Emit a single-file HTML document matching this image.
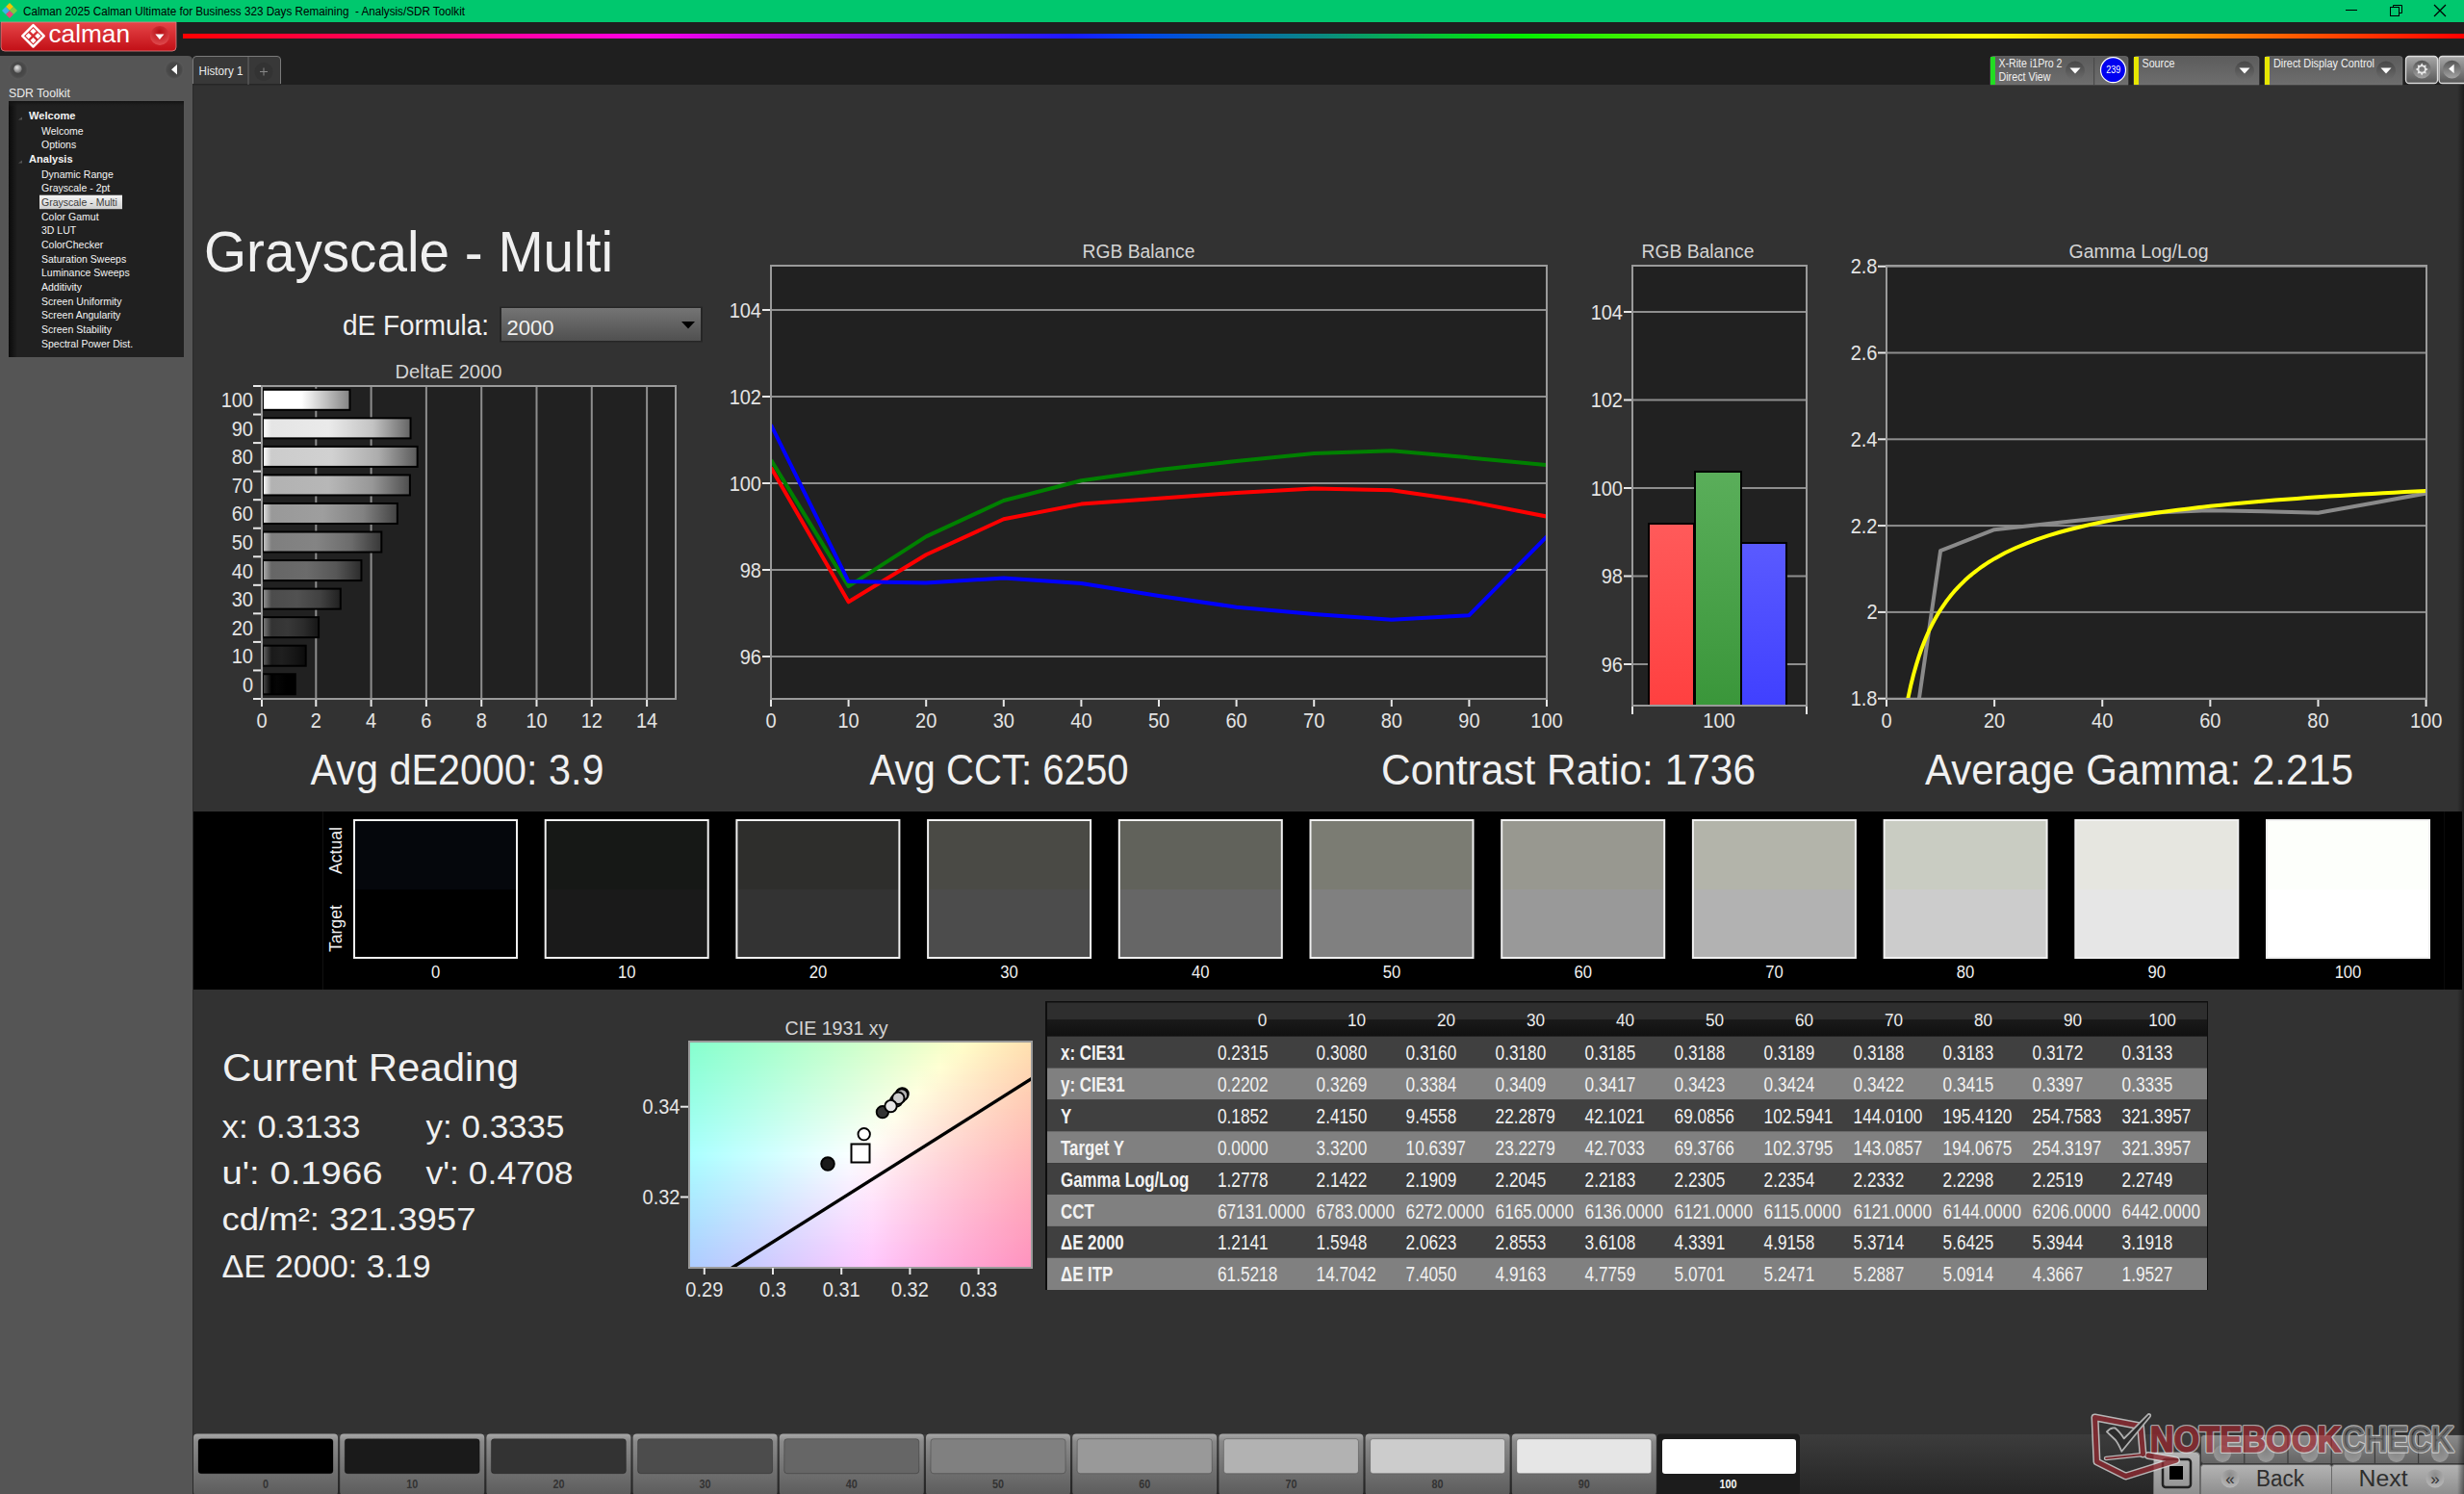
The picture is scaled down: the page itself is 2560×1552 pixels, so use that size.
<!DOCTYPE html><html><head><meta charset="utf-8"><title>Calman Grayscale - Multi</title><style>html,body{margin:0;padding:0;background:#323232;overflow:hidden}svg{position:absolute;left:0;top:0;display:block}text{font-family:"Liberation Sans",sans-serif}</style></head><body><svg width="2560" height="1552" viewBox="0 0 2560 1552"><defs><linearGradient id="gRed" x1="0" y1="0" x2="0" y2="1"><stop offset="0" stop-color="#e64548"/><stop offset="1" stop-color="#c20f16"/></linearGradient><radialGradient id="gRedBtn" cx="0.5" cy="0.3" r="0.7"><stop offset="0" stop-color="#b50d14"/><stop offset="1" stop-color="#e04a4e"/></radialGradient><linearGradient id="gRain" x1="190" y1="0" x2="2560" y2="0" gradientUnits="userSpaceOnUse"><stop offset="0" stop-color="#ff0000"/><stop offset="0.202" stop-color="#ff00e6"/><stop offset="0.39" stop-color="#1a1aff"/><stop offset="0.42" stop-color="#0044ee"/><stop offset="0.50" stop-color="#0a8a80"/><stop offset="0.585" stop-color="#00ee00"/><stop offset="0.79" stop-color="#ffff00"/><stop offset="1" stop-color="#ff0000"/></linearGradient><radialGradient id="gKnob" cx="0.5" cy="0.5" r="0.5"><stop offset="0" stop-color="#3e3e3e"/><stop offset="0.75" stop-color="#4a4a4a"/><stop offset="1" stop-color="#5a5a5a"/></radialGradient><radialGradient id="gDot" cx="0.4" cy="0.35" r="0.6"><stop offset="0" stop-color="#e8e8e8"/><stop offset="1" stop-color="#777"/></radialGradient><linearGradient id="gTreeL" x1="0" y1="0" x2="1" y2="0"><stop offset="0" stop-color="#0a0a0a"/><stop offset="1" stop-color="#202020"/></linearGradient><linearGradient id="gTreeT" x1="0" y1="0" x2="0" y2="1"><stop offset="0" stop-color="#101010"/><stop offset="1" stop-color="#202020" stop-opacity="0"/></linearGradient><linearGradient id="gSel" x1="0" y1="0" x2="0" y2="1"><stop offset="0" stop-color="#f4f4f4"/><stop offset="1" stop-color="#cfcfcf"/></linearGradient><linearGradient id="gCtl" x1="0" y1="0" x2="0" y2="1"><stop offset="0" stop-color="#5c5c5c"/><stop offset="1" stop-color="#6e6e6e"/></linearGradient><linearGradient id="gCtlBtn" x1="0" y1="0" x2="0" y2="1"><stop offset="0" stop-color="#474747"/><stop offset="1" stop-color="#6c6c6c"/></linearGradient><linearGradient id="gBtn2" x1="0" y1="0" x2="0" y2="1"><stop offset="0" stop-color="#a8a8a8"/><stop offset="1" stop-color="#575757"/></linearGradient><linearGradient id="gBtnC" x1="0" y1="0" x2="0" y2="1"><stop offset="0" stop-color="#555"/><stop offset="1" stop-color="#a4a4a4"/></linearGradient><linearGradient id="gCombo" x1="0" y1="0" x2="0" y2="1"><stop offset="0" stop-color="#747474"/><stop offset="1" stop-color="#505050"/></linearGradient><linearGradient id="gDE100" gradientUnits="userSpaceOnUse" x1="273" y1="0" x2="362.4" y2="0"><stop offset="0" stop-color="#fff"/><stop offset="0.45" stop-color="#fff"/><stop offset="1" stop-color="#858585"/></linearGradient><linearGradient id="gDE90" gradientUnits="userSpaceOnUse" x1="273" y1="0" x2="425.5" y2="0"><stop offset="0" stop-color="rgb(255,255,255)"/><stop offset="0.059" stop-color="rgb(229,229,229)"/><stop offset="0.45" stop-color="rgb(234,234,234)"/><stop offset="0.75" stop-color="rgb(195,195,195)"/><stop offset="1" stop-color="rgb(103,103,103)"/></linearGradient><linearGradient id="gDE80" gradientUnits="userSpaceOnUse" x1="273" y1="0" x2="432.7" y2="0"><stop offset="0" stop-color="rgb(255,255,255)"/><stop offset="0.056" stop-color="rgb(204,204,204)"/><stop offset="0.45" stop-color="rgb(209,209,209)"/><stop offset="0.75" stop-color="rgb(173,173,173)"/><stop offset="1" stop-color="rgb(92,92,92)"/></linearGradient><linearGradient id="gDE70" gradientUnits="userSpaceOnUse" x1="273" y1="0" x2="424.9" y2="0"><stop offset="0" stop-color="rgb(253,253,253)"/><stop offset="0.059" stop-color="rgb(178,178,178)"/><stop offset="0.45" stop-color="rgb(183,183,183)"/><stop offset="0.75" stop-color="rgb(151,151,151)"/><stop offset="1" stop-color="rgb(80,80,80)"/></linearGradient><linearGradient id="gDE60" gradientUnits="userSpaceOnUse" x1="273" y1="0" x2="411.8" y2="0"><stop offset="0" stop-color="rgb(228,228,228)"/><stop offset="0.065" stop-color="rgb(153,153,153)"/><stop offset="0.45" stop-color="rgb(158,158,158)"/><stop offset="0.75" stop-color="rgb(130,130,130)"/><stop offset="1" stop-color="rgb(69,69,69)"/></linearGradient><linearGradient id="gDE50" gradientUnits="userSpaceOnUse" x1="273" y1="0" x2="395.3" y2="0"><stop offset="0" stop-color="rgb(202,202,202)"/><stop offset="0.074" stop-color="rgb(127,127,127)"/><stop offset="0.45" stop-color="rgb(132,132,132)"/><stop offset="0.75" stop-color="rgb(108,108,108)"/><stop offset="1" stop-color="rgb(57,57,57)"/></linearGradient><linearGradient id="gDE40" gradientUnits="userSpaceOnUse" x1="273" y1="0" x2="374.4" y2="0"><stop offset="0" stop-color="rgb(177,177,177)"/><stop offset="0.089" stop-color="rgb(102,102,102)"/><stop offset="0.45" stop-color="rgb(107,107,107)"/><stop offset="0.75" stop-color="rgb(87,87,87)"/><stop offset="1" stop-color="rgb(46,46,46)"/></linearGradient><linearGradient id="gDE30" gradientUnits="userSpaceOnUse" x1="273" y1="0" x2="352.8" y2="0"><stop offset="0" stop-color="rgb(151,151,151)"/><stop offset="0.113" stop-color="rgb(76,76,76)"/><stop offset="0.45" stop-color="rgb(81,81,81)"/><stop offset="0.75" stop-color="rgb(65,65,65)"/><stop offset="1" stop-color="rgb(34,34,34)"/></linearGradient><linearGradient id="gDE20" gradientUnits="userSpaceOnUse" x1="273" y1="0" x2="330.1" y2="0"><stop offset="0" stop-color="rgb(126,126,126)"/><stop offset="0.158" stop-color="rgb(51,51,51)"/><stop offset="0.45" stop-color="rgb(56,56,56)"/><stop offset="0.75" stop-color="rgb(43,43,43)"/><stop offset="1" stop-color="rgb(23,23,23)"/></linearGradient><linearGradient id="gDE10" gradientUnits="userSpaceOnUse" x1="273" y1="0" x2="316.7" y2="0"><stop offset="0" stop-color="rgb(101,101,101)"/><stop offset="0.206" stop-color="rgb(26,26,26)"/><stop offset="0.45" stop-color="rgb(31,31,31)"/><stop offset="0.75" stop-color="rgb(22,22,22)"/><stop offset="1" stop-color="rgb(12,12,12)"/></linearGradient><linearGradient id="gDE0" gradientUnits="userSpaceOnUse" x1="273" y1="0" x2="305.8" y2="0"><stop offset="0" stop-color="rgb(75,75,75)"/><stop offset="0.275" stop-color="rgb(0,0,0)"/><stop offset="0.45" stop-color="rgb(5,5,5)"/><stop offset="0.75" stop-color="rgb(0,0,0)"/><stop offset="1" stop-color="rgb(0,0,0)"/></linearGradient><linearGradient id="gBR" x1="0" y1="0" x2="0" y2="1"><stop offset="0" stop-color="#ff5a5a"/><stop offset="1" stop-color="#ff4040"/></linearGradient><linearGradient id="gBG" x1="0" y1="0" x2="0" y2="1"><stop offset="0" stop-color="#5aae5a"/><stop offset="1" stop-color="#3a963a"/></linearGradient><linearGradient id="gBB" x1="0" y1="0" x2="0" y2="1"><stop offset="0" stop-color="#5a5aff"/><stop offset="1" stop-color="#4040ff"/></linearGradient><linearGradient id="cie0"><stop offset="0.000" stop-color="#87ffce"/><stop offset="0.067" stop-color="#90ffce"/><stop offset="0.133" stop-color="#99ffce"/><stop offset="0.200" stop-color="#a3ffcd"/><stop offset="0.267" stop-color="#acffcd"/><stop offset="0.333" stop-color="#b6ffcc"/><stop offset="0.400" stop-color="#c0ffcc"/><stop offset="0.467" stop-color="#caffcc"/><stop offset="0.533" stop-color="#d4ffcb"/><stop offset="0.600" stop-color="#dfffcb"/><stop offset="0.667" stop-color="#eaffca"/><stop offset="0.733" stop-color="#f4ffca"/><stop offset="0.800" stop-color="#fffec9"/><stop offset="0.867" stop-color="#fff4c0"/><stop offset="0.933" stop-color="#ffeab7"/><stop offset="1.000" stop-color="#ffe0b0"/></linearGradient><linearGradient id="cie1"><stop offset="0.000" stop-color="#88ffd0"/><stop offset="0.067" stop-color="#91ffcf"/><stop offset="0.133" stop-color="#9affcf"/><stop offset="0.200" stop-color="#a4ffce"/><stop offset="0.267" stop-color="#adffce"/><stop offset="0.333" stop-color="#b7ffce"/><stop offset="0.400" stop-color="#c1ffcd"/><stop offset="0.467" stop-color="#cbffcd"/><stop offset="0.533" stop-color="#d6ffcc"/><stop offset="0.600" stop-color="#e0ffcc"/><stop offset="0.667" stop-color="#ebffcb"/><stop offset="0.733" stop-color="#f6ffcb"/><stop offset="0.800" stop-color="#fffdc9"/><stop offset="0.867" stop-color="#fff2c0"/><stop offset="0.933" stop-color="#ffe8b8"/><stop offset="1.000" stop-color="#ffdfb0"/></linearGradient><linearGradient id="cie2"><stop offset="0.000" stop-color="#88ffd1"/><stop offset="0.067" stop-color="#92ffd0"/><stop offset="0.133" stop-color="#9bffd0"/><stop offset="0.200" stop-color="#a5ffd0"/><stop offset="0.267" stop-color="#aeffcf"/><stop offset="0.333" stop-color="#b8ffcf"/><stop offset="0.400" stop-color="#c2ffce"/><stop offset="0.467" stop-color="#ccffce"/><stop offset="0.533" stop-color="#d7ffcd"/><stop offset="0.600" stop-color="#e1ffcd"/><stop offset="0.667" stop-color="#ecffcd"/><stop offset="0.733" stop-color="#f7ffcc"/><stop offset="0.800" stop-color="#fffcc9"/><stop offset="0.867" stop-color="#fff1c0"/><stop offset="0.933" stop-color="#ffe7b8"/><stop offset="1.000" stop-color="#ffdeb0"/></linearGradient><linearGradient id="cie3"><stop offset="0.000" stop-color="#89ffd2"/><stop offset="0.067" stop-color="#93ffd1"/><stop offset="0.133" stop-color="#9cffd1"/><stop offset="0.200" stop-color="#a5ffd1"/><stop offset="0.267" stop-color="#afffd0"/><stop offset="0.333" stop-color="#b9ffd0"/><stop offset="0.400" stop-color="#c3ffd0"/><stop offset="0.467" stop-color="#cdffcf"/><stop offset="0.533" stop-color="#d8ffcf"/><stop offset="0.600" stop-color="#e2ffce"/><stop offset="0.667" stop-color="#edffce"/><stop offset="0.733" stop-color="#f8ffcd"/><stop offset="0.800" stop-color="#fffbc9"/><stop offset="0.867" stop-color="#fff0c0"/><stop offset="0.933" stop-color="#ffe6b8"/><stop offset="1.000" stop-color="#ffddb0"/></linearGradient><linearGradient id="cie4"><stop offset="0.000" stop-color="#8affd3"/><stop offset="0.067" stop-color="#93ffd3"/><stop offset="0.133" stop-color="#9dffd2"/><stop offset="0.200" stop-color="#a6ffd2"/><stop offset="0.267" stop-color="#b0ffd2"/><stop offset="0.333" stop-color="#baffd1"/><stop offset="0.400" stop-color="#c4ffd1"/><stop offset="0.467" stop-color="#ceffd0"/><stop offset="0.533" stop-color="#d9ffd0"/><stop offset="0.600" stop-color="#e4ffd0"/><stop offset="0.667" stop-color="#efffcf"/><stop offset="0.733" stop-color="#faffcf"/><stop offset="0.800" stop-color="#fff9ca"/><stop offset="0.867" stop-color="#ffefc1"/><stop offset="0.933" stop-color="#ffe5b8"/><stop offset="1.000" stop-color="#ffdcb0"/></linearGradient><linearGradient id="cie5"><stop offset="0.000" stop-color="#8bffd4"/><stop offset="0.067" stop-color="#94ffd4"/><stop offset="0.133" stop-color="#9effd3"/><stop offset="0.200" stop-color="#a7ffd3"/><stop offset="0.267" stop-color="#b1ffd3"/><stop offset="0.333" stop-color="#bbffd2"/><stop offset="0.400" stop-color="#c5ffd2"/><stop offset="0.467" stop-color="#d0ffd2"/><stop offset="0.533" stop-color="#daffd1"/><stop offset="0.600" stop-color="#e5ffd1"/><stop offset="0.667" stop-color="#f0ffd0"/><stop offset="0.733" stop-color="#fbffd0"/><stop offset="0.800" stop-color="#fff8ca"/><stop offset="0.867" stop-color="#ffedc1"/><stop offset="0.933" stop-color="#ffe4b9"/><stop offset="1.000" stop-color="#ffdbb1"/></linearGradient><linearGradient id="cie6"><stop offset="0.000" stop-color="#8cffd5"/><stop offset="0.067" stop-color="#95ffd5"/><stop offset="0.133" stop-color="#9fffd5"/><stop offset="0.200" stop-color="#a8ffd4"/><stop offset="0.267" stop-color="#b2ffd4"/><stop offset="0.333" stop-color="#bcffd4"/><stop offset="0.400" stop-color="#c6ffd3"/><stop offset="0.467" stop-color="#d1ffd3"/><stop offset="0.533" stop-color="#dbffd2"/><stop offset="0.600" stop-color="#e6ffd2"/><stop offset="0.667" stop-color="#f1ffd2"/><stop offset="0.733" stop-color="#fcffd1"/><stop offset="0.800" stop-color="#fff7ca"/><stop offset="0.867" stop-color="#ffecc1"/><stop offset="0.933" stop-color="#ffe3b9"/><stop offset="1.000" stop-color="#ffd9b1"/></linearGradient><linearGradient id="cie7"><stop offset="0.000" stop-color="#8dffd6"/><stop offset="0.067" stop-color="#96ffd6"/><stop offset="0.133" stop-color="#a0ffd6"/><stop offset="0.200" stop-color="#a9ffd5"/><stop offset="0.267" stop-color="#b3ffd5"/><stop offset="0.333" stop-color="#bdffd5"/><stop offset="0.400" stop-color="#c7ffd4"/><stop offset="0.467" stop-color="#d2ffd4"/><stop offset="0.533" stop-color="#dcffd4"/><stop offset="0.600" stop-color="#e7ffd3"/><stop offset="0.667" stop-color="#f2ffd3"/><stop offset="0.733" stop-color="#feffd2"/><stop offset="0.800" stop-color="#fff5ca"/><stop offset="0.867" stop-color="#ffebc1"/><stop offset="0.933" stop-color="#ffe1b9"/><stop offset="1.000" stop-color="#ffd8b1"/></linearGradient><linearGradient id="cie8"><stop offset="0.000" stop-color="#8effd8"/><stop offset="0.067" stop-color="#97ffd7"/><stop offset="0.133" stop-color="#a0ffd7"/><stop offset="0.200" stop-color="#aaffd7"/><stop offset="0.267" stop-color="#b4ffd6"/><stop offset="0.333" stop-color="#beffd6"/><stop offset="0.400" stop-color="#c9ffd6"/><stop offset="0.467" stop-color="#d3ffd5"/><stop offset="0.533" stop-color="#deffd5"/><stop offset="0.600" stop-color="#e9ffd5"/><stop offset="0.667" stop-color="#f4ffd4"/><stop offset="0.733" stop-color="#ffffd4"/><stop offset="0.800" stop-color="#fff4ca"/><stop offset="0.867" stop-color="#ffeac1"/><stop offset="0.933" stop-color="#ffe0b9"/><stop offset="1.000" stop-color="#ffd7b1"/></linearGradient><linearGradient id="cie9"><stop offset="0.000" stop-color="#8effd9"/><stop offset="0.067" stop-color="#98ffd8"/><stop offset="0.133" stop-color="#a1ffd8"/><stop offset="0.200" stop-color="#abffd8"/><stop offset="0.267" stop-color="#b5ffd8"/><stop offset="0.333" stop-color="#bfffd7"/><stop offset="0.400" stop-color="#caffd7"/><stop offset="0.467" stop-color="#d4ffd7"/><stop offset="0.533" stop-color="#dfffd6"/><stop offset="0.600" stop-color="#eaffd6"/><stop offset="0.667" stop-color="#f5ffd5"/><stop offset="0.733" stop-color="#fffed4"/><stop offset="0.800" stop-color="#fff3cb"/><stop offset="0.867" stop-color="#ffe9c2"/><stop offset="0.933" stop-color="#ffdfb9"/><stop offset="1.000" stop-color="#ffd6b2"/></linearGradient><linearGradient id="cie10"><stop offset="0.000" stop-color="#8fffda"/><stop offset="0.067" stop-color="#99ffda"/><stop offset="0.133" stop-color="#a2ffd9"/><stop offset="0.200" stop-color="#acffd9"/><stop offset="0.267" stop-color="#b6ffd9"/><stop offset="0.333" stop-color="#c0ffd8"/><stop offset="0.400" stop-color="#cbffd8"/><stop offset="0.467" stop-color="#d5ffd8"/><stop offset="0.533" stop-color="#e0ffd7"/><stop offset="0.600" stop-color="#ebffd7"/><stop offset="0.667" stop-color="#f6ffd7"/><stop offset="0.733" stop-color="#fffdd4"/><stop offset="0.800" stop-color="#fff2cb"/><stop offset="0.867" stop-color="#ffe7c2"/><stop offset="0.933" stop-color="#ffdeba"/><stop offset="1.000" stop-color="#ffd5b2"/></linearGradient><linearGradient id="cie11"><stop offset="0.000" stop-color="#90ffdb"/><stop offset="0.067" stop-color="#9affdb"/><stop offset="0.133" stop-color="#a3ffdb"/><stop offset="0.200" stop-color="#adffda"/><stop offset="0.267" stop-color="#b7ffda"/><stop offset="0.333" stop-color="#c1ffda"/><stop offset="0.400" stop-color="#ccffd9"/><stop offset="0.467" stop-color="#d6ffd9"/><stop offset="0.533" stop-color="#e1ffd9"/><stop offset="0.600" stop-color="#ecffd8"/><stop offset="0.667" stop-color="#f7ffd8"/><stop offset="0.733" stop-color="#fffbd4"/><stop offset="0.800" stop-color="#fff0cb"/><stop offset="0.867" stop-color="#ffe6c2"/><stop offset="0.933" stop-color="#ffddba"/><stop offset="1.000" stop-color="#ffd4b2"/></linearGradient><linearGradient id="cie12"><stop offset="0.000" stop-color="#91ffdc"/><stop offset="0.067" stop-color="#9bffdc"/><stop offset="0.133" stop-color="#a4ffdc"/><stop offset="0.200" stop-color="#aeffdc"/><stop offset="0.267" stop-color="#b8ffdb"/><stop offset="0.333" stop-color="#c3ffdb"/><stop offset="0.400" stop-color="#cdffdb"/><stop offset="0.467" stop-color="#d8ffda"/><stop offset="0.533" stop-color="#e2ffda"/><stop offset="0.600" stop-color="#edffda"/><stop offset="0.667" stop-color="#f9ffd9"/><stop offset="0.733" stop-color="#fffad5"/><stop offset="0.800" stop-color="#ffefcb"/><stop offset="0.867" stop-color="#ffe5c2"/><stop offset="0.933" stop-color="#ffdcba"/><stop offset="1.000" stop-color="#ffd3b2"/></linearGradient><linearGradient id="cie13"><stop offset="0.000" stop-color="#92ffde"/><stop offset="0.067" stop-color="#9bffdd"/><stop offset="0.133" stop-color="#a5ffdd"/><stop offset="0.200" stop-color="#afffdd"/><stop offset="0.267" stop-color="#b9ffdc"/><stop offset="0.333" stop-color="#c4ffdc"/><stop offset="0.400" stop-color="#ceffdc"/><stop offset="0.467" stop-color="#d9ffdc"/><stop offset="0.533" stop-color="#e4ffdb"/><stop offset="0.600" stop-color="#efffdb"/><stop offset="0.667" stop-color="#faffdb"/><stop offset="0.733" stop-color="#fff9d5"/><stop offset="0.800" stop-color="#ffeecb"/><stop offset="0.867" stop-color="#ffe4c2"/><stop offset="0.933" stop-color="#ffdbba"/><stop offset="1.000" stop-color="#ffd2b2"/></linearGradient><linearGradient id="cie14"><stop offset="0.000" stop-color="#93ffdf"/><stop offset="0.067" stop-color="#9cffdf"/><stop offset="0.133" stop-color="#a6ffde"/><stop offset="0.200" stop-color="#b0ffde"/><stop offset="0.267" stop-color="#baffde"/><stop offset="0.333" stop-color="#c5ffdd"/><stop offset="0.400" stop-color="#cfffdd"/><stop offset="0.467" stop-color="#daffdd"/><stop offset="0.533" stop-color="#e5ffdd"/><stop offset="0.600" stop-color="#f0ffdc"/><stop offset="0.667" stop-color="#fbffdc"/><stop offset="0.733" stop-color="#fff7d5"/><stop offset="0.800" stop-color="#ffedcc"/><stop offset="0.867" stop-color="#ffe3c3"/><stop offset="0.933" stop-color="#ffd9ba"/><stop offset="1.000" stop-color="#ffd1b3"/></linearGradient><linearGradient id="cie15"><stop offset="0.000" stop-color="#94ffe0"/><stop offset="0.067" stop-color="#9dffe0"/><stop offset="0.133" stop-color="#a7ffe0"/><stop offset="0.200" stop-color="#b1ffdf"/><stop offset="0.267" stop-color="#bbffdf"/><stop offset="0.333" stop-color="#c6ffdf"/><stop offset="0.400" stop-color="#d0ffde"/><stop offset="0.467" stop-color="#dbffde"/><stop offset="0.533" stop-color="#e6ffde"/><stop offset="0.600" stop-color="#f1ffde"/><stop offset="0.667" stop-color="#fdffdd"/><stop offset="0.733" stop-color="#fff6d5"/><stop offset="0.800" stop-color="#ffebcc"/><stop offset="0.867" stop-color="#ffe2c3"/><stop offset="0.933" stop-color="#ffd8bb"/><stop offset="1.000" stop-color="#ffd0b3"/></linearGradient><linearGradient id="cie16"><stop offset="0.000" stop-color="#95ffe1"/><stop offset="0.067" stop-color="#9effe1"/><stop offset="0.133" stop-color="#a8ffe1"/><stop offset="0.200" stop-color="#b2ffe1"/><stop offset="0.267" stop-color="#bcffe0"/><stop offset="0.333" stop-color="#c7ffe0"/><stop offset="0.400" stop-color="#d2ffe0"/><stop offset="0.467" stop-color="#dcffdf"/><stop offset="0.533" stop-color="#e7ffdf"/><stop offset="0.600" stop-color="#f3ffdf"/><stop offset="0.667" stop-color="#feffdf"/><stop offset="0.733" stop-color="#fff5d5"/><stop offset="0.800" stop-color="#ffeacc"/><stop offset="0.867" stop-color="#ffe0c3"/><stop offset="0.933" stop-color="#ffd7bb"/><stop offset="1.000" stop-color="#ffcfb3"/></linearGradient><linearGradient id="cie17"><stop offset="0.000" stop-color="#95ffe3"/><stop offset="0.067" stop-color="#9fffe2"/><stop offset="0.133" stop-color="#a9ffe2"/><stop offset="0.200" stop-color="#b3ffe2"/><stop offset="0.267" stop-color="#beffe2"/><stop offset="0.333" stop-color="#c8ffe1"/><stop offset="0.400" stop-color="#d3ffe1"/><stop offset="0.467" stop-color="#deffe1"/><stop offset="0.533" stop-color="#e9ffe1"/><stop offset="0.600" stop-color="#f4ffe0"/><stop offset="0.667" stop-color="#ffffe0"/><stop offset="0.733" stop-color="#fff3d6"/><stop offset="0.800" stop-color="#ffe9cc"/><stop offset="0.867" stop-color="#ffdfc3"/><stop offset="0.933" stop-color="#ffd6bb"/><stop offset="1.000" stop-color="#ffcdb3"/></linearGradient><linearGradient id="cie18"><stop offset="0.000" stop-color="#96ffe4"/><stop offset="0.067" stop-color="#a0ffe4"/><stop offset="0.133" stop-color="#aaffe3"/><stop offset="0.200" stop-color="#b4ffe3"/><stop offset="0.267" stop-color="#bfffe3"/><stop offset="0.333" stop-color="#c9ffe3"/><stop offset="0.400" stop-color="#d4ffe2"/><stop offset="0.467" stop-color="#dfffe2"/><stop offset="0.533" stop-color="#eaffe2"/><stop offset="0.600" stop-color="#f5ffe2"/><stop offset="0.667" stop-color="#fffde0"/><stop offset="0.733" stop-color="#fff2d6"/><stop offset="0.800" stop-color="#ffe8cc"/><stop offset="0.867" stop-color="#ffdec3"/><stop offset="0.933" stop-color="#ffd5bb"/><stop offset="1.000" stop-color="#ffccb3"/></linearGradient><linearGradient id="cie19"><stop offset="0.000" stop-color="#97ffe5"/><stop offset="0.067" stop-color="#a1ffe5"/><stop offset="0.133" stop-color="#abffe5"/><stop offset="0.200" stop-color="#b5ffe4"/><stop offset="0.267" stop-color="#c0ffe4"/><stop offset="0.333" stop-color="#caffe4"/><stop offset="0.400" stop-color="#d5ffe4"/><stop offset="0.467" stop-color="#e0ffe3"/><stop offset="0.533" stop-color="#ebffe3"/><stop offset="0.600" stop-color="#f7ffe3"/><stop offset="0.667" stop-color="#fffce0"/><stop offset="0.733" stop-color="#fff1d6"/><stop offset="0.800" stop-color="#ffe7cc"/><stop offset="0.867" stop-color="#ffddc4"/><stop offset="0.933" stop-color="#ffd4bb"/><stop offset="1.000" stop-color="#ffcbb4"/></linearGradient><linearGradient id="cie20"><stop offset="0.000" stop-color="#98ffe6"/><stop offset="0.067" stop-color="#a2ffe6"/><stop offset="0.133" stop-color="#acffe6"/><stop offset="0.200" stop-color="#b6ffe6"/><stop offset="0.267" stop-color="#c1ffe5"/><stop offset="0.333" stop-color="#cbffe5"/><stop offset="0.400" stop-color="#d6ffe5"/><stop offset="0.467" stop-color="#e1ffe5"/><stop offset="0.533" stop-color="#ecffe5"/><stop offset="0.600" stop-color="#f8ffe4"/><stop offset="0.667" stop-color="#fffbe0"/><stop offset="0.733" stop-color="#fff0d6"/><stop offset="0.800" stop-color="#ffe5cd"/><stop offset="0.867" stop-color="#ffdcc4"/><stop offset="0.933" stop-color="#ffd3bc"/><stop offset="1.000" stop-color="#ffcab4"/></linearGradient><linearGradient id="cie21"><stop offset="0.000" stop-color="#99ffe8"/><stop offset="0.067" stop-color="#a3ffe7"/><stop offset="0.133" stop-color="#adffe7"/><stop offset="0.200" stop-color="#b7ffe7"/><stop offset="0.267" stop-color="#c2ffe7"/><stop offset="0.333" stop-color="#cdffe7"/><stop offset="0.400" stop-color="#d7ffe6"/><stop offset="0.467" stop-color="#e2ffe6"/><stop offset="0.533" stop-color="#eeffe6"/><stop offset="0.600" stop-color="#f9ffe6"/><stop offset="0.667" stop-color="#fff9e0"/><stop offset="0.733" stop-color="#ffeed6"/><stop offset="0.800" stop-color="#ffe4cd"/><stop offset="0.867" stop-color="#ffdbc4"/><stop offset="0.933" stop-color="#ffd2bc"/><stop offset="1.000" stop-color="#ffc9b4"/></linearGradient><linearGradient id="cie22"><stop offset="0.000" stop-color="#9affe9"/><stop offset="0.067" stop-color="#a4ffe9"/><stop offset="0.133" stop-color="#aeffe8"/><stop offset="0.200" stop-color="#b8ffe8"/><stop offset="0.267" stop-color="#c3ffe8"/><stop offset="0.333" stop-color="#ceffe8"/><stop offset="0.400" stop-color="#d9ffe8"/><stop offset="0.467" stop-color="#e4ffe8"/><stop offset="0.533" stop-color="#efffe7"/><stop offset="0.600" stop-color="#fbffe7"/><stop offset="0.667" stop-color="#fff8e0"/><stop offset="0.733" stop-color="#ffedd6"/><stop offset="0.800" stop-color="#ffe3cd"/><stop offset="0.867" stop-color="#ffd9c4"/><stop offset="0.933" stop-color="#ffd1bc"/><stop offset="1.000" stop-color="#ffc8b4"/></linearGradient><linearGradient id="cie23"><stop offset="0.000" stop-color="#9bffea"/><stop offset="0.067" stop-color="#a5ffea"/><stop offset="0.133" stop-color="#afffea"/><stop offset="0.200" stop-color="#baffea"/><stop offset="0.267" stop-color="#c4ffe9"/><stop offset="0.333" stop-color="#cfffe9"/><stop offset="0.400" stop-color="#daffe9"/><stop offset="0.467" stop-color="#e5ffe9"/><stop offset="0.533" stop-color="#f0ffe9"/><stop offset="0.600" stop-color="#fcffe8"/><stop offset="0.667" stop-color="#fff7e1"/><stop offset="0.733" stop-color="#ffecd7"/><stop offset="0.800" stop-color="#ffe2cd"/><stop offset="0.867" stop-color="#ffd8c4"/><stop offset="0.933" stop-color="#ffcfbc"/><stop offset="1.000" stop-color="#ffc7b5"/></linearGradient><linearGradient id="cie24"><stop offset="0.000" stop-color="#9cffeb"/><stop offset="0.067" stop-color="#a6ffeb"/><stop offset="0.133" stop-color="#b0ffeb"/><stop offset="0.200" stop-color="#bbffeb"/><stop offset="0.267" stop-color="#c5ffeb"/><stop offset="0.333" stop-color="#d0ffeb"/><stop offset="0.400" stop-color="#dbffea"/><stop offset="0.467" stop-color="#e6ffea"/><stop offset="0.533" stop-color="#f2ffea"/><stop offset="0.600" stop-color="#fdffea"/><stop offset="0.667" stop-color="#fff5e1"/><stop offset="0.733" stop-color="#ffebd7"/><stop offset="0.800" stop-color="#ffe0cd"/><stop offset="0.867" stop-color="#ffd7c5"/><stop offset="0.933" stop-color="#ffcebc"/><stop offset="1.000" stop-color="#ffc6b5"/></linearGradient><linearGradient id="cie25"><stop offset="0.000" stop-color="#9dffed"/><stop offset="0.067" stop-color="#a7ffed"/><stop offset="0.133" stop-color="#b1ffec"/><stop offset="0.200" stop-color="#bcffec"/><stop offset="0.267" stop-color="#c6ffec"/><stop offset="0.333" stop-color="#d1ffec"/><stop offset="0.400" stop-color="#dcffec"/><stop offset="0.467" stop-color="#e7ffec"/><stop offset="0.533" stop-color="#f3ffeb"/><stop offset="0.600" stop-color="#ffffeb"/><stop offset="0.667" stop-color="#fff4e1"/><stop offset="0.733" stop-color="#ffe9d7"/><stop offset="0.800" stop-color="#ffdfce"/><stop offset="0.867" stop-color="#ffd6c5"/><stop offset="0.933" stop-color="#ffcdbd"/><stop offset="1.000" stop-color="#ffc5b5"/></linearGradient><linearGradient id="cie26"><stop offset="0.000" stop-color="#9effee"/><stop offset="0.067" stop-color="#a8ffee"/><stop offset="0.133" stop-color="#b2ffee"/><stop offset="0.200" stop-color="#bdffee"/><stop offset="0.267" stop-color="#c7ffed"/><stop offset="0.333" stop-color="#d2ffed"/><stop offset="0.400" stop-color="#ddffed"/><stop offset="0.467" stop-color="#e9ffed"/><stop offset="0.533" stop-color="#f4ffed"/><stop offset="0.600" stop-color="#fffeec"/><stop offset="0.667" stop-color="#fff3e1"/><stop offset="0.733" stop-color="#ffe8d7"/><stop offset="0.800" stop-color="#ffdece"/><stop offset="0.867" stop-color="#ffd5c5"/><stop offset="0.933" stop-color="#ffccbd"/><stop offset="1.000" stop-color="#ffc4b5"/></linearGradient><linearGradient id="cie27"><stop offset="0.000" stop-color="#9fffef"/><stop offset="0.067" stop-color="#a9ffef"/><stop offset="0.133" stop-color="#b3ffef"/><stop offset="0.200" stop-color="#beffef"/><stop offset="0.267" stop-color="#c9ffef"/><stop offset="0.333" stop-color="#d4ffef"/><stop offset="0.400" stop-color="#dfffef"/><stop offset="0.467" stop-color="#eaffee"/><stop offset="0.533" stop-color="#f6ffee"/><stop offset="0.600" stop-color="#fffdec"/><stop offset="0.667" stop-color="#fff1e1"/><stop offset="0.733" stop-color="#ffe7d7"/><stop offset="0.800" stop-color="#ffddce"/><stop offset="0.867" stop-color="#ffd4c5"/><stop offset="0.933" stop-color="#ffcbbd"/><stop offset="1.000" stop-color="#ffc3b5"/></linearGradient><linearGradient id="cie28"><stop offset="0.000" stop-color="#a0fff1"/><stop offset="0.067" stop-color="#aafff1"/><stop offset="0.133" stop-color="#b4fff0"/><stop offset="0.200" stop-color="#bffff0"/><stop offset="0.267" stop-color="#cafff0"/><stop offset="0.333" stop-color="#d5fff0"/><stop offset="0.400" stop-color="#e0fff0"/><stop offset="0.467" stop-color="#ebfff0"/><stop offset="0.533" stop-color="#f7fff0"/><stop offset="0.600" stop-color="#fffbec"/><stop offset="0.667" stop-color="#fff0e1"/><stop offset="0.733" stop-color="#ffe6d7"/><stop offset="0.800" stop-color="#ffdcce"/><stop offset="0.867" stop-color="#ffd3c5"/><stop offset="0.933" stop-color="#ffcabd"/><stop offset="1.000" stop-color="#ffc2b6"/></linearGradient><linearGradient id="cie29"><stop offset="0.000" stop-color="#a1fff2"/><stop offset="0.067" stop-color="#abfff2"/><stop offset="0.133" stop-color="#b5fff2"/><stop offset="0.200" stop-color="#c0fff2"/><stop offset="0.267" stop-color="#cbfff2"/><stop offset="0.333" stop-color="#d6fff2"/><stop offset="0.400" stop-color="#e1fff1"/><stop offset="0.467" stop-color="#edfff1"/><stop offset="0.533" stop-color="#f8fff1"/><stop offset="0.600" stop-color="#fffaec"/><stop offset="0.667" stop-color="#ffefe2"/><stop offset="0.733" stop-color="#ffe4d8"/><stop offset="0.800" stop-color="#ffdbce"/><stop offset="0.867" stop-color="#ffd1c6"/><stop offset="0.933" stop-color="#ffc9bd"/><stop offset="1.000" stop-color="#ffc1b6"/></linearGradient><linearGradient id="cie30"><stop offset="0.000" stop-color="#a2fff3"/><stop offset="0.067" stop-color="#acfff3"/><stop offset="0.133" stop-color="#b7fff3"/><stop offset="0.200" stop-color="#c1fff3"/><stop offset="0.267" stop-color="#ccfff3"/><stop offset="0.333" stop-color="#d7fff3"/><stop offset="0.400" stop-color="#e2fff3"/><stop offset="0.467" stop-color="#eefff3"/><stop offset="0.533" stop-color="#fafff3"/><stop offset="0.600" stop-color="#fff8ec"/><stop offset="0.667" stop-color="#ffede2"/><stop offset="0.733" stop-color="#ffe3d8"/><stop offset="0.800" stop-color="#ffd9ce"/><stop offset="0.867" stop-color="#ffd0c6"/><stop offset="0.933" stop-color="#ffc8be"/><stop offset="1.000" stop-color="#ffc0b6"/></linearGradient><linearGradient id="cie31"><stop offset="0.000" stop-color="#a3fff5"/><stop offset="0.067" stop-color="#adfff5"/><stop offset="0.133" stop-color="#b8fff5"/><stop offset="0.200" stop-color="#c2fff4"/><stop offset="0.267" stop-color="#cdfff4"/><stop offset="0.333" stop-color="#d8fff4"/><stop offset="0.400" stop-color="#e4fff4"/><stop offset="0.467" stop-color="#effff4"/><stop offset="0.533" stop-color="#fbfff4"/><stop offset="0.600" stop-color="#fff7ec"/><stop offset="0.667" stop-color="#ffece2"/><stop offset="0.733" stop-color="#ffe2d8"/><stop offset="0.800" stop-color="#ffd8cf"/><stop offset="0.867" stop-color="#ffcfc6"/><stop offset="0.933" stop-color="#ffc7be"/><stop offset="1.000" stop-color="#ffbfb6"/></linearGradient><linearGradient id="cie32"><stop offset="0.000" stop-color="#a4fff6"/><stop offset="0.067" stop-color="#aefff6"/><stop offset="0.133" stop-color="#b9fff6"/><stop offset="0.200" stop-color="#c3fff6"/><stop offset="0.267" stop-color="#cefff6"/><stop offset="0.333" stop-color="#dafff6"/><stop offset="0.400" stop-color="#e5fff6"/><stop offset="0.467" stop-color="#f1fff6"/><stop offset="0.533" stop-color="#fcfff6"/><stop offset="0.600" stop-color="#fff6ed"/><stop offset="0.667" stop-color="#ffebe2"/><stop offset="0.733" stop-color="#ffe1d8"/><stop offset="0.800" stop-color="#ffd7cf"/><stop offset="0.867" stop-color="#ffcec6"/><stop offset="0.933" stop-color="#ffc6be"/><stop offset="1.000" stop-color="#ffbeb6"/></linearGradient><linearGradient id="cie33"><stop offset="0.000" stop-color="#a5fff7"/><stop offset="0.067" stop-color="#affff7"/><stop offset="0.133" stop-color="#bafff7"/><stop offset="0.200" stop-color="#c5fff7"/><stop offset="0.267" stop-color="#d0fff7"/><stop offset="0.333" stop-color="#dbfff7"/><stop offset="0.400" stop-color="#e6fff7"/><stop offset="0.467" stop-color="#f2fff7"/><stop offset="0.533" stop-color="#fefff7"/><stop offset="0.600" stop-color="#fff4ed"/><stop offset="0.667" stop-color="#ffeae2"/><stop offset="0.733" stop-color="#ffdfd8"/><stop offset="0.800" stop-color="#ffd6cf"/><stop offset="0.867" stop-color="#ffcdc6"/><stop offset="0.933" stop-color="#ffc5be"/><stop offset="1.000" stop-color="#ffbdb7"/></linearGradient><linearGradient id="cie34"><stop offset="0.000" stop-color="#a6fff9"/><stop offset="0.067" stop-color="#b0fff9"/><stop offset="0.133" stop-color="#bbfff9"/><stop offset="0.200" stop-color="#c6fff9"/><stop offset="0.267" stop-color="#d1fff9"/><stop offset="0.333" stop-color="#dcfff9"/><stop offset="0.400" stop-color="#e8fff9"/><stop offset="0.467" stop-color="#f3fff9"/><stop offset="0.533" stop-color="#fffff8"/><stop offset="0.600" stop-color="#fff3ed"/><stop offset="0.667" stop-color="#ffe8e2"/><stop offset="0.733" stop-color="#ffded8"/><stop offset="0.800" stop-color="#ffd5cf"/><stop offset="0.867" stop-color="#ffccc7"/><stop offset="0.933" stop-color="#ffc4be"/><stop offset="1.000" stop-color="#ffbcb7"/></linearGradient><linearGradient id="cie35"><stop offset="0.000" stop-color="#a7fffa"/><stop offset="0.067" stop-color="#b1fffa"/><stop offset="0.133" stop-color="#bcfffa"/><stop offset="0.200" stop-color="#c7fffa"/><stop offset="0.267" stop-color="#d2fffa"/><stop offset="0.333" stop-color="#ddfffa"/><stop offset="0.400" stop-color="#e9fffa"/><stop offset="0.467" stop-color="#f5fffa"/><stop offset="0.533" stop-color="#fffdf8"/><stop offset="0.600" stop-color="#fff2ed"/><stop offset="0.667" stop-color="#ffe7e2"/><stop offset="0.733" stop-color="#ffddd9"/><stop offset="0.800" stop-color="#ffd4cf"/><stop offset="0.867" stop-color="#ffcbc7"/><stop offset="0.933" stop-color="#ffc3bf"/><stop offset="1.000" stop-color="#ffbbb7"/></linearGradient><linearGradient id="cie36"><stop offset="0.000" stop-color="#a8fffc"/><stop offset="0.067" stop-color="#b2fffc"/><stop offset="0.133" stop-color="#bdfffc"/><stop offset="0.200" stop-color="#c8fffc"/><stop offset="0.267" stop-color="#d3fffc"/><stop offset="0.333" stop-color="#dffffc"/><stop offset="0.400" stop-color="#eafffc"/><stop offset="0.467" stop-color="#f6fffc"/><stop offset="0.533" stop-color="#fffcf9"/><stop offset="0.600" stop-color="#fff0ed"/><stop offset="0.667" stop-color="#ffe6e3"/><stop offset="0.733" stop-color="#ffdcd9"/><stop offset="0.800" stop-color="#ffd2d0"/><stop offset="0.867" stop-color="#ffcac7"/><stop offset="0.933" stop-color="#ffc2bf"/><stop offset="1.000" stop-color="#ffbab7"/></linearGradient><linearGradient id="cie37"><stop offset="0.000" stop-color="#a9fffd"/><stop offset="0.067" stop-color="#b3fffd"/><stop offset="0.133" stop-color="#befffd"/><stop offset="0.200" stop-color="#c9fffd"/><stop offset="0.267" stop-color="#d4fffd"/><stop offset="0.333" stop-color="#e0fffd"/><stop offset="0.400" stop-color="#ecfffd"/><stop offset="0.467" stop-color="#f7fffd"/><stop offset="0.533" stop-color="#fffbf9"/><stop offset="0.600" stop-color="#ffefed"/><stop offset="0.667" stop-color="#ffe5e3"/><stop offset="0.733" stop-color="#ffdbd9"/><stop offset="0.800" stop-color="#ffd1d0"/><stop offset="0.867" stop-color="#ffc9c7"/><stop offset="0.933" stop-color="#ffc0bf"/><stop offset="1.000" stop-color="#ffb9b7"/></linearGradient><linearGradient id="cie38"><stop offset="0.000" stop-color="#aafffe"/><stop offset="0.067" stop-color="#b5fffe"/><stop offset="0.133" stop-color="#bffffe"/><stop offset="0.200" stop-color="#caffff"/><stop offset="0.267" stop-color="#d6ffff"/><stop offset="0.333" stop-color="#e1ffff"/><stop offset="0.400" stop-color="#edffff"/><stop offset="0.467" stop-color="#f9ffff"/><stop offset="0.533" stop-color="#fff9f9"/><stop offset="0.600" stop-color="#ffeeed"/><stop offset="0.667" stop-color="#ffe3e3"/><stop offset="0.733" stop-color="#ffd9d9"/><stop offset="0.800" stop-color="#ffd0d0"/><stop offset="0.867" stop-color="#ffc8c7"/><stop offset="0.933" stop-color="#ffbfbf"/><stop offset="1.000" stop-color="#ffb8b8"/></linearGradient><linearGradient id="cie39"><stop offset="0.000" stop-color="#aafeff"/><stop offset="0.067" stop-color="#b5feff"/><stop offset="0.133" stop-color="#c0feff"/><stop offset="0.200" stop-color="#cbfeff"/><stop offset="0.267" stop-color="#d6feff"/><stop offset="0.333" stop-color="#e2feff"/><stop offset="0.400" stop-color="#edfeff"/><stop offset="0.467" stop-color="#f9feff"/><stop offset="0.533" stop-color="#fff8f9"/><stop offset="0.600" stop-color="#ffedee"/><stop offset="0.667" stop-color="#ffe2e3"/><stop offset="0.733" stop-color="#ffd8d9"/><stop offset="0.800" stop-color="#ffcfd0"/><stop offset="0.867" stop-color="#ffc6c7"/><stop offset="0.933" stop-color="#ffbebf"/><stop offset="1.000" stop-color="#ffb7b8"/></linearGradient><linearGradient id="cie40"><stop offset="0.000" stop-color="#aafdff"/><stop offset="0.067" stop-color="#b5fdff"/><stop offset="0.133" stop-color="#c0fdff"/><stop offset="0.200" stop-color="#cbfdff"/><stop offset="0.267" stop-color="#d6fdff"/><stop offset="0.333" stop-color="#e1fcff"/><stop offset="0.400" stop-color="#edfcff"/><stop offset="0.467" stop-color="#f9fcff"/><stop offset="0.533" stop-color="#fff6f9"/><stop offset="0.600" stop-color="#ffebee"/><stop offset="0.667" stop-color="#ffe1e3"/><stop offset="0.733" stop-color="#ffd7d9"/><stop offset="0.800" stop-color="#ffced0"/><stop offset="0.867" stop-color="#ffc5c8"/><stop offset="0.933" stop-color="#ffbdc0"/><stop offset="1.000" stop-color="#ffb6b8"/></linearGradient><linearGradient id="cie41"><stop offset="0.000" stop-color="#abfbff"/><stop offset="0.067" stop-color="#b5fbff"/><stop offset="0.133" stop-color="#c0fbff"/><stop offset="0.200" stop-color="#cbfbff"/><stop offset="0.267" stop-color="#d6fbff"/><stop offset="0.333" stop-color="#e1fbff"/><stop offset="0.400" stop-color="#edfbff"/><stop offset="0.467" stop-color="#f9fbff"/><stop offset="0.533" stop-color="#fff5f9"/><stop offset="0.600" stop-color="#ffeaee"/><stop offset="0.667" stop-color="#ffe0e3"/><stop offset="0.733" stop-color="#ffd6da"/><stop offset="0.800" stop-color="#ffcdd0"/><stop offset="0.867" stop-color="#ffc4c8"/><stop offset="0.933" stop-color="#ffbcc0"/><stop offset="1.000" stop-color="#ffb5b8"/></linearGradient><linearGradient id="cie42"><stop offset="0.000" stop-color="#abfaff"/><stop offset="0.067" stop-color="#b5faff"/><stop offset="0.133" stop-color="#c0faff"/><stop offset="0.200" stop-color="#cbfaff"/><stop offset="0.267" stop-color="#d6faff"/><stop offset="0.333" stop-color="#e1faff"/><stop offset="0.400" stop-color="#edf9ff"/><stop offset="0.467" stop-color="#f9f9ff"/><stop offset="0.533" stop-color="#fff4f9"/><stop offset="0.600" stop-color="#ffe9ee"/><stop offset="0.667" stop-color="#ffdee4"/><stop offset="0.733" stop-color="#ffd5da"/><stop offset="0.800" stop-color="#ffccd1"/><stop offset="0.867" stop-color="#ffc3c8"/><stop offset="0.933" stop-color="#ffbbc0"/><stop offset="1.000" stop-color="#ffb4b8"/></linearGradient><linearGradient id="cie43"><stop offset="0.000" stop-color="#abf8ff"/><stop offset="0.067" stop-color="#b5f8ff"/><stop offset="0.133" stop-color="#c0f8ff"/><stop offset="0.200" stop-color="#cbf8ff"/><stop offset="0.267" stop-color="#d6f8ff"/><stop offset="0.333" stop-color="#e1f8ff"/><stop offset="0.400" stop-color="#edf8ff"/><stop offset="0.467" stop-color="#f9f8ff"/><stop offset="0.533" stop-color="#fff2f9"/><stop offset="0.600" stop-color="#ffe7ee"/><stop offset="0.667" stop-color="#ffdde4"/><stop offset="0.733" stop-color="#ffd3da"/><stop offset="0.800" stop-color="#ffcbd1"/><stop offset="0.867" stop-color="#ffc2c8"/><stop offset="0.933" stop-color="#ffbac0"/><stop offset="1.000" stop-color="#ffb3b9"/></linearGradient><linearGradient id="cie44"><stop offset="0.000" stop-color="#abf7ff"/><stop offset="0.067" stop-color="#b5f7ff"/><stop offset="0.133" stop-color="#c0f7ff"/><stop offset="0.200" stop-color="#cbf7ff"/><stop offset="0.267" stop-color="#d6f7ff"/><stop offset="0.333" stop-color="#e1f7ff"/><stop offset="0.400" stop-color="#edf6ff"/><stop offset="0.467" stop-color="#f9f6ff"/><stop offset="0.533" stop-color="#fff1f9"/><stop offset="0.600" stop-color="#ffe6ee"/><stop offset="0.667" stop-color="#ffdce4"/><stop offset="0.733" stop-color="#ffd2da"/><stop offset="0.800" stop-color="#ffc9d1"/><stop offset="0.867" stop-color="#ffc1c8"/><stop offset="0.933" stop-color="#ffb9c0"/><stop offset="1.000" stop-color="#ffb2b9"/></linearGradient><linearGradient id="cie45"><stop offset="0.000" stop-color="#abf6ff"/><stop offset="0.067" stop-color="#b5f6ff"/><stop offset="0.133" stop-color="#c0f5ff"/><stop offset="0.200" stop-color="#cbf5ff"/><stop offset="0.267" stop-color="#d6f5ff"/><stop offset="0.333" stop-color="#e1f5ff"/><stop offset="0.400" stop-color="#edf5ff"/><stop offset="0.467" stop-color="#f9f5ff"/><stop offset="0.533" stop-color="#fff0fa"/><stop offset="0.600" stop-color="#ffe5ee"/><stop offset="0.667" stop-color="#ffdbe4"/><stop offset="0.733" stop-color="#ffd1da"/><stop offset="0.800" stop-color="#ffc8d1"/><stop offset="0.867" stop-color="#ffc0c9"/><stop offset="0.933" stop-color="#ffb8c1"/><stop offset="1.000" stop-color="#ffb1b9"/></linearGradient><linearGradient id="cie46"><stop offset="0.000" stop-color="#abf4ff"/><stop offset="0.067" stop-color="#b5f4ff"/><stop offset="0.133" stop-color="#c0f4ff"/><stop offset="0.200" stop-color="#cbf4ff"/><stop offset="0.267" stop-color="#d6f4ff"/><stop offset="0.333" stop-color="#e1f4ff"/><stop offset="0.400" stop-color="#edf4ff"/><stop offset="0.467" stop-color="#f8f3ff"/><stop offset="0.533" stop-color="#ffeefa"/><stop offset="0.600" stop-color="#ffe3ef"/><stop offset="0.667" stop-color="#ffd9e4"/><stop offset="0.733" stop-color="#ffd0da"/><stop offset="0.800" stop-color="#ffc7d1"/><stop offset="0.867" stop-color="#ffbfc9"/><stop offset="0.933" stop-color="#ffb7c1"/><stop offset="1.000" stop-color="#ffb0b9"/></linearGradient><linearGradient id="cie47"><stop offset="0.000" stop-color="#abf3ff"/><stop offset="0.067" stop-color="#b5f3ff"/><stop offset="0.133" stop-color="#c0f3ff"/><stop offset="0.200" stop-color="#cbf3ff"/><stop offset="0.267" stop-color="#d6f2ff"/><stop offset="0.333" stop-color="#e1f2ff"/><stop offset="0.400" stop-color="#edf2ff"/><stop offset="0.467" stop-color="#f8f2ff"/><stop offset="0.533" stop-color="#ffedfa"/><stop offset="0.600" stop-color="#ffe2ef"/><stop offset="0.667" stop-color="#ffd8e4"/><stop offset="0.733" stop-color="#ffcfdb"/><stop offset="0.800" stop-color="#ffc6d1"/><stop offset="0.867" stop-color="#ffbec9"/><stop offset="0.933" stop-color="#ffb6c1"/><stop offset="1.000" stop-color="#ffafb9"/></linearGradient><linearGradient id="cie48"><stop offset="0.000" stop-color="#abf2ff"/><stop offset="0.067" stop-color="#b6f1ff"/><stop offset="0.133" stop-color="#c0f1ff"/><stop offset="0.200" stop-color="#cbf1ff"/><stop offset="0.267" stop-color="#d6f1ff"/><stop offset="0.333" stop-color="#e1f1ff"/><stop offset="0.400" stop-color="#edf1ff"/><stop offset="0.467" stop-color="#f8f0ff"/><stop offset="0.533" stop-color="#ffecfa"/><stop offset="0.600" stop-color="#ffe1ef"/><stop offset="0.667" stop-color="#ffd7e4"/><stop offset="0.733" stop-color="#ffcedb"/><stop offset="0.800" stop-color="#ffc5d2"/><stop offset="0.867" stop-color="#ffbdc9"/><stop offset="0.933" stop-color="#ffb5c1"/><stop offset="1.000" stop-color="#ffaeba"/></linearGradient><linearGradient id="cie49"><stop offset="0.000" stop-color="#abf0ff"/><stop offset="0.067" stop-color="#b6f0ff"/><stop offset="0.133" stop-color="#c0f0ff"/><stop offset="0.200" stop-color="#cbf0ff"/><stop offset="0.267" stop-color="#d6f0ff"/><stop offset="0.333" stop-color="#e1efff"/><stop offset="0.400" stop-color="#edefff"/><stop offset="0.467" stop-color="#f8efff"/><stop offset="0.533" stop-color="#ffeafa"/><stop offset="0.600" stop-color="#ffe0ef"/><stop offset="0.667" stop-color="#ffd6e5"/><stop offset="0.733" stop-color="#ffcddb"/><stop offset="0.800" stop-color="#ffc4d2"/><stop offset="0.867" stop-color="#ffbcc9"/><stop offset="0.933" stop-color="#ffb4c1"/><stop offset="1.000" stop-color="#ffadba"/></linearGradient><linearGradient id="cie50"><stop offset="0.000" stop-color="#abefff"/><stop offset="0.067" stop-color="#b6efff"/><stop offset="0.133" stop-color="#c0efff"/><stop offset="0.200" stop-color="#cbeeff"/><stop offset="0.267" stop-color="#d6eeff"/><stop offset="0.333" stop-color="#e1eeff"/><stop offset="0.400" stop-color="#eceeff"/><stop offset="0.467" stop-color="#f8eeff"/><stop offset="0.533" stop-color="#ffe9fa"/><stop offset="0.600" stop-color="#ffdeef"/><stop offset="0.667" stop-color="#ffd5e5"/><stop offset="0.733" stop-color="#ffcbdb"/><stop offset="0.800" stop-color="#ffc3d2"/><stop offset="0.867" stop-color="#ffbbc9"/><stop offset="0.933" stop-color="#ffb3c1"/><stop offset="1.000" stop-color="#ffacba"/></linearGradient><linearGradient id="cie51"><stop offset="0.000" stop-color="#abeeff"/><stop offset="0.067" stop-color="#b6edff"/><stop offset="0.133" stop-color="#c0edff"/><stop offset="0.200" stop-color="#cbedff"/><stop offset="0.267" stop-color="#d6edff"/><stop offset="0.333" stop-color="#e1edff"/><stop offset="0.400" stop-color="#ececff"/><stop offset="0.467" stop-color="#f8ecff"/><stop offset="0.533" stop-color="#ffe8fa"/><stop offset="0.600" stop-color="#ffddef"/><stop offset="0.667" stop-color="#ffd3e5"/><stop offset="0.733" stop-color="#ffcadb"/><stop offset="0.800" stop-color="#ffc2d2"/><stop offset="0.867" stop-color="#ffbaca"/><stop offset="0.933" stop-color="#ffb2c2"/><stop offset="1.000" stop-color="#ffabba"/></linearGradient><linearGradient id="cie52"><stop offset="0.000" stop-color="#abecff"/><stop offset="0.067" stop-color="#b6ecff"/><stop offset="0.133" stop-color="#c0ecff"/><stop offset="0.200" stop-color="#cbecff"/><stop offset="0.267" stop-color="#d6ebff"/><stop offset="0.333" stop-color="#e1ebff"/><stop offset="0.400" stop-color="#ecebff"/><stop offset="0.467" stop-color="#f8ebff"/><stop offset="0.533" stop-color="#ffe6fa"/><stop offset="0.600" stop-color="#ffdcef"/><stop offset="0.667" stop-color="#ffd2e5"/><stop offset="0.733" stop-color="#ffc9db"/><stop offset="0.800" stop-color="#ffc1d2"/><stop offset="0.867" stop-color="#ffb9ca"/><stop offset="0.933" stop-color="#ffb1c2"/><stop offset="1.000" stop-color="#ffaaba"/></linearGradient><linearGradient id="cie53"><stop offset="0.000" stop-color="#acebff"/><stop offset="0.067" stop-color="#b6ebff"/><stop offset="0.133" stop-color="#c0eaff"/><stop offset="0.200" stop-color="#cbeaff"/><stop offset="0.267" stop-color="#d6eaff"/><stop offset="0.333" stop-color="#e1eaff"/><stop offset="0.400" stop-color="#eceaff"/><stop offset="0.467" stop-color="#f8e9ff"/><stop offset="0.533" stop-color="#ffe5fb"/><stop offset="0.600" stop-color="#ffdbef"/><stop offset="0.667" stop-color="#ffd1e5"/><stop offset="0.733" stop-color="#ffc8dc"/><stop offset="0.800" stop-color="#ffc0d2"/><stop offset="0.867" stop-color="#ffb8ca"/><stop offset="0.933" stop-color="#ffb0c2"/><stop offset="1.000" stop-color="#ffa9ba"/></linearGradient><linearGradient id="cie54"><stop offset="0.000" stop-color="#ace9ff"/><stop offset="0.067" stop-color="#b6e9ff"/><stop offset="0.133" stop-color="#c0e9ff"/><stop offset="0.200" stop-color="#cbe9ff"/><stop offset="0.267" stop-color="#d6e9ff"/><stop offset="0.333" stop-color="#e1e8ff"/><stop offset="0.400" stop-color="#ece8ff"/><stop offset="0.467" stop-color="#f8e8ff"/><stop offset="0.533" stop-color="#ffe4fb"/><stop offset="0.600" stop-color="#ffd9f0"/><stop offset="0.667" stop-color="#ffd0e5"/><stop offset="0.733" stop-color="#ffc7dc"/><stop offset="0.800" stop-color="#ffbed3"/><stop offset="0.867" stop-color="#ffb7ca"/><stop offset="0.933" stop-color="#ffafc2"/><stop offset="1.000" stop-color="#ffa8bb"/></linearGradient><linearGradient id="cie55"><stop offset="0.000" stop-color="#ace8ff"/><stop offset="0.067" stop-color="#b6e8ff"/><stop offset="0.133" stop-color="#c0e8ff"/><stop offset="0.200" stop-color="#cbe7ff"/><stop offset="0.267" stop-color="#d6e7ff"/><stop offset="0.333" stop-color="#e1e7ff"/><stop offset="0.400" stop-color="#ece7ff"/><stop offset="0.467" stop-color="#f8e6ff"/><stop offset="0.533" stop-color="#ffe2fb"/><stop offset="0.600" stop-color="#ffd8f0"/><stop offset="0.667" stop-color="#ffcfe5"/><stop offset="0.733" stop-color="#ffc6dc"/><stop offset="0.800" stop-color="#ffbdd3"/><stop offset="0.867" stop-color="#ffb6ca"/><stop offset="0.933" stop-color="#ffaec2"/><stop offset="1.000" stop-color="#ffa7bb"/></linearGradient><linearGradient id="cie56"><stop offset="0.000" stop-color="#ace7ff"/><stop offset="0.067" stop-color="#b6e7ff"/><stop offset="0.133" stop-color="#c0e6ff"/><stop offset="0.200" stop-color="#cbe6ff"/><stop offset="0.267" stop-color="#d6e6ff"/><stop offset="0.333" stop-color="#e1e6ff"/><stop offset="0.400" stop-color="#ece5ff"/><stop offset="0.467" stop-color="#f8e5ff"/><stop offset="0.533" stop-color="#ffe1fb"/><stop offset="0.600" stop-color="#ffd7f0"/><stop offset="0.667" stop-color="#ffcde6"/><stop offset="0.733" stop-color="#ffc5dc"/><stop offset="0.800" stop-color="#ffbcd3"/><stop offset="0.867" stop-color="#ffb5cb"/><stop offset="0.933" stop-color="#ffadc3"/><stop offset="1.000" stop-color="#ffa6bb"/></linearGradient><linearGradient id="cie57"><stop offset="0.000" stop-color="#ace6ff"/><stop offset="0.067" stop-color="#b6e5ff"/><stop offset="0.133" stop-color="#c1e5ff"/><stop offset="0.200" stop-color="#cbe5ff"/><stop offset="0.267" stop-color="#d6e4ff"/><stop offset="0.333" stop-color="#e1e4ff"/><stop offset="0.400" stop-color="#ece4ff"/><stop offset="0.467" stop-color="#f7e4ff"/><stop offset="0.533" stop-color="#ffe0fb"/><stop offset="0.600" stop-color="#ffd6f0"/><stop offset="0.667" stop-color="#ffcce6"/><stop offset="0.733" stop-color="#ffc4dc"/><stop offset="0.800" stop-color="#ffbbd3"/><stop offset="0.867" stop-color="#ffb4cb"/><stop offset="0.933" stop-color="#ffacc3"/><stop offset="1.000" stop-color="#ffa5bb"/></linearGradient><linearGradient id="cie58"><stop offset="0.000" stop-color="#ace4ff"/><stop offset="0.067" stop-color="#b6e4ff"/><stop offset="0.133" stop-color="#c1e4ff"/><stop offset="0.200" stop-color="#cbe3ff"/><stop offset="0.267" stop-color="#d6e3ff"/><stop offset="0.333" stop-color="#e1e3ff"/><stop offset="0.400" stop-color="#ece3ff"/><stop offset="0.467" stop-color="#f7e2ff"/><stop offset="0.533" stop-color="#ffdefb"/><stop offset="0.600" stop-color="#ffd4f0"/><stop offset="0.667" stop-color="#ffcbe6"/><stop offset="0.733" stop-color="#ffc2dc"/><stop offset="0.800" stop-color="#ffbad3"/><stop offset="0.867" stop-color="#ffb3cb"/><stop offset="0.933" stop-color="#ffabc3"/><stop offset="1.000" stop-color="#ffa4bb"/></linearGradient><linearGradient id="cie59"><stop offset="0.000" stop-color="#ace3ff"/><stop offset="0.067" stop-color="#b6e3ff"/><stop offset="0.133" stop-color="#c1e2ff"/><stop offset="0.200" stop-color="#cbe2ff"/><stop offset="0.267" stop-color="#d6e2ff"/><stop offset="0.333" stop-color="#e1e1ff"/><stop offset="0.400" stop-color="#ece1ff"/><stop offset="0.467" stop-color="#f7e1ff"/><stop offset="0.533" stop-color="#ffddfb"/><stop offset="0.600" stop-color="#ffd3f0"/><stop offset="0.667" stop-color="#ffcae6"/><stop offset="0.733" stop-color="#ffc1dc"/><stop offset="0.800" stop-color="#ffb9d3"/><stop offset="0.867" stop-color="#ffb1cb"/><stop offset="0.933" stop-color="#ffaac3"/><stop offset="1.000" stop-color="#ffa3bc"/></linearGradient><linearGradient id="cie60"><stop offset="0.000" stop-color="#ace2ff"/><stop offset="0.067" stop-color="#b6e1ff"/><stop offset="0.133" stop-color="#c1e1ff"/><stop offset="0.200" stop-color="#cbe1ff"/><stop offset="0.267" stop-color="#d6e0ff"/><stop offset="0.333" stop-color="#e1e0ff"/><stop offset="0.400" stop-color="#ece0ff"/><stop offset="0.467" stop-color="#f7dfff"/><stop offset="0.533" stop-color="#ffdcfb"/><stop offset="0.600" stop-color="#ffd2f0"/><stop offset="0.667" stop-color="#ffc9e6"/><stop offset="0.733" stop-color="#ffc0dd"/><stop offset="0.800" stop-color="#ffb8d4"/><stop offset="0.867" stop-color="#ffb0cb"/><stop offset="0.933" stop-color="#ffa9c3"/><stop offset="1.000" stop-color="#ffa3bc"/></linearGradient><linearGradient id="cie61"><stop offset="0.000" stop-color="#ace0ff"/><stop offset="0.067" stop-color="#b6e0ff"/><stop offset="0.133" stop-color="#c1e0ff"/><stop offset="0.200" stop-color="#cbdfff"/><stop offset="0.267" stop-color="#d6dfff"/><stop offset="0.333" stop-color="#e1dfff"/><stop offset="0.400" stop-color="#ecdeff"/><stop offset="0.467" stop-color="#f7deff"/><stop offset="0.533" stop-color="#ffdbfb"/><stop offset="0.600" stop-color="#ffd1f0"/><stop offset="0.667" stop-color="#ffc8e6"/><stop offset="0.733" stop-color="#ffbfdd"/><stop offset="0.800" stop-color="#ffb7d4"/><stop offset="0.867" stop-color="#ffafcb"/><stop offset="0.933" stop-color="#ffa8c3"/><stop offset="1.000" stop-color="#ffa2bc"/></linearGradient><linearGradient id="cie62"><stop offset="0.000" stop-color="#acdfff"/><stop offset="0.067" stop-color="#b6dfff"/><stop offset="0.133" stop-color="#c1deff"/><stop offset="0.200" stop-color="#cbdeff"/><stop offset="0.267" stop-color="#d6deff"/><stop offset="0.333" stop-color="#e1ddff"/><stop offset="0.400" stop-color="#ecddff"/><stop offset="0.467" stop-color="#f7ddff"/><stop offset="0.533" stop-color="#ffd9fc"/><stop offset="0.600" stop-color="#ffd0f1"/><stop offset="0.667" stop-color="#ffc7e6"/><stop offset="0.733" stop-color="#ffbedd"/><stop offset="0.800" stop-color="#ffb6d4"/><stop offset="0.867" stop-color="#ffaecc"/><stop offset="0.933" stop-color="#ffa7c4"/><stop offset="1.000" stop-color="#ffa1bc"/></linearGradient><linearGradient id="cie63"><stop offset="0.000" stop-color="#acdeff"/><stop offset="0.067" stop-color="#b6ddff"/><stop offset="0.133" stop-color="#c1ddff"/><stop offset="0.200" stop-color="#cbddff"/><stop offset="0.267" stop-color="#d6dcff"/><stop offset="0.333" stop-color="#e1dcff"/><stop offset="0.400" stop-color="#ecdcff"/><stop offset="0.467" stop-color="#f7dbff"/><stop offset="0.533" stop-color="#ffd8fc"/><stop offset="0.600" stop-color="#ffcef1"/><stop offset="0.667" stop-color="#ffc5e7"/><stop offset="0.733" stop-color="#ffbddd"/><stop offset="0.800" stop-color="#ffb5d4"/><stop offset="0.867" stop-color="#ffadcc"/><stop offset="0.933" stop-color="#ffa6c4"/><stop offset="1.000" stop-color="#ffa0bc"/></linearGradient><linearGradient id="cie64"><stop offset="0.000" stop-color="#acdcff"/><stop offset="0.067" stop-color="#b7dcff"/><stop offset="0.133" stop-color="#c1dcff"/><stop offset="0.200" stop-color="#cbdbff"/><stop offset="0.267" stop-color="#d6dbff"/><stop offset="0.333" stop-color="#e1dbff"/><stop offset="0.400" stop-color="#ecdaff"/><stop offset="0.467" stop-color="#f7daff"/><stop offset="0.533" stop-color="#ffd7fc"/><stop offset="0.600" stop-color="#ffcdf1"/><stop offset="0.667" stop-color="#ffc4e7"/><stop offset="0.733" stop-color="#ffbcdd"/><stop offset="0.800" stop-color="#ffb4d4"/><stop offset="0.867" stop-color="#ffaccc"/><stop offset="0.933" stop-color="#ffa5c4"/><stop offset="1.000" stop-color="#ff9fbd"/></linearGradient><linearGradient id="cie65"><stop offset="0.000" stop-color="#addbff"/><stop offset="0.067" stop-color="#b7dbff"/><stop offset="0.133" stop-color="#c1dbff"/><stop offset="0.200" stop-color="#cbdaff"/><stop offset="0.267" stop-color="#d6daff"/><stop offset="0.333" stop-color="#e1d9ff"/><stop offset="0.400" stop-color="#ecd9ff"/><stop offset="0.467" stop-color="#f7d9ff"/><stop offset="0.533" stop-color="#ffd6fc"/><stop offset="0.600" stop-color="#ffccf1"/><stop offset="0.667" stop-color="#ffc3e7"/><stop offset="0.733" stop-color="#ffbbdd"/><stop offset="0.800" stop-color="#ffb3d4"/><stop offset="0.867" stop-color="#ffabcc"/><stop offset="0.933" stop-color="#ffa4c4"/><stop offset="1.000" stop-color="#ff9ebd"/></linearGradient><linearGradient id="cie66"><stop offset="0.000" stop-color="#addaff"/><stop offset="0.067" stop-color="#b7daff"/><stop offset="0.133" stop-color="#c1d9ff"/><stop offset="0.200" stop-color="#cbd9ff"/><stop offset="0.267" stop-color="#d6d8ff"/><stop offset="0.333" stop-color="#e1d8ff"/><stop offset="0.400" stop-color="#ecd8ff"/><stop offset="0.467" stop-color="#f7d7ff"/><stop offset="0.533" stop-color="#ffd4fc"/><stop offset="0.600" stop-color="#ffcbf1"/><stop offset="0.667" stop-color="#ffc2e7"/><stop offset="0.733" stop-color="#ffbade"/><stop offset="0.800" stop-color="#ffb2d5"/><stop offset="0.867" stop-color="#ffaacc"/><stop offset="0.933" stop-color="#ffa4c4"/><stop offset="1.000" stop-color="#ff9dbd"/></linearGradient><linearGradient id="cie67"><stop offset="0.000" stop-color="#add9ff"/><stop offset="0.067" stop-color="#b7d8ff"/><stop offset="0.133" stop-color="#c1d8ff"/><stop offset="0.200" stop-color="#cbd8ff"/><stop offset="0.267" stop-color="#d6d7ff"/><stop offset="0.333" stop-color="#e1d7ff"/><stop offset="0.400" stop-color="#ebd6ff"/><stop offset="0.467" stop-color="#f7d6ff"/><stop offset="0.533" stop-color="#ffd3fc"/><stop offset="0.600" stop-color="#ffcaf1"/><stop offset="0.667" stop-color="#ffc1e7"/><stop offset="0.733" stop-color="#ffb9de"/><stop offset="0.800" stop-color="#ffb1d5"/><stop offset="0.867" stop-color="#ffa9cc"/><stop offset="0.933" stop-color="#ffa3c5"/><stop offset="1.000" stop-color="#ff9cbd"/></linearGradient><linearGradient id="cie68"><stop offset="0.000" stop-color="#add7ff"/><stop offset="0.067" stop-color="#b7d7ff"/><stop offset="0.133" stop-color="#c1d7ff"/><stop offset="0.200" stop-color="#cbd6ff"/><stop offset="0.267" stop-color="#d6d6ff"/><stop offset="0.333" stop-color="#e1d5ff"/><stop offset="0.400" stop-color="#ebd5ff"/><stop offset="0.467" stop-color="#f7d5ff"/><stop offset="0.533" stop-color="#ffd2fc"/><stop offset="0.600" stop-color="#ffc9f1"/><stop offset="0.667" stop-color="#ffc0e7"/><stop offset="0.733" stop-color="#ffb7de"/><stop offset="0.800" stop-color="#ffb0d5"/><stop offset="0.867" stop-color="#ffa8cd"/><stop offset="0.933" stop-color="#ffa2c5"/><stop offset="1.000" stop-color="#ff9bbd"/></linearGradient><linearGradient id="cie69"><stop offset="0.000" stop-color="#add6ff"/><stop offset="0.067" stop-color="#b7d6ff"/><stop offset="0.133" stop-color="#c1d5ff"/><stop offset="0.200" stop-color="#cbd5ff"/><stop offset="0.267" stop-color="#d6d5ff"/><stop offset="0.333" stop-color="#e0d4ff"/><stop offset="0.400" stop-color="#ebd4ff"/><stop offset="0.467" stop-color="#f6d3ff"/><stop offset="0.533" stop-color="#ffd1fc"/><stop offset="0.600" stop-color="#ffc7f1"/><stop offset="0.667" stop-color="#ffbfe7"/><stop offset="0.733" stop-color="#ffb6de"/><stop offset="0.800" stop-color="#ffafd5"/><stop offset="0.867" stop-color="#ffa8cd"/><stop offset="0.933" stop-color="#ffa1c5"/><stop offset="1.000" stop-color="#ff9abd"/></linearGradient><linearGradient id="cie70"><stop offset="0.000" stop-color="#add5ff"/><stop offset="0.067" stop-color="#b7d5ff"/><stop offset="0.133" stop-color="#c1d4ff"/><stop offset="0.200" stop-color="#cbd4ff"/><stop offset="0.267" stop-color="#d6d3ff"/><stop offset="0.333" stop-color="#e0d3ff"/><stop offset="0.400" stop-color="#ebd2ff"/><stop offset="0.467" stop-color="#f6d2ff"/><stop offset="0.533" stop-color="#ffcffc"/><stop offset="0.600" stop-color="#ffc6f2"/><stop offset="0.667" stop-color="#ffbde8"/><stop offset="0.733" stop-color="#ffb5de"/><stop offset="0.800" stop-color="#ffaed5"/><stop offset="0.867" stop-color="#ffa7cd"/><stop offset="0.933" stop-color="#ffa0c5"/><stop offset="1.000" stop-color="#ff99be"/></linearGradient><linearGradient id="cie71"><stop offset="0.000" stop-color="#add4ff"/><stop offset="0.067" stop-color="#b7d3ff"/><stop offset="0.133" stop-color="#c1d3ff"/><stop offset="0.200" stop-color="#cbd2ff"/><stop offset="0.267" stop-color="#d6d2ff"/><stop offset="0.333" stop-color="#e0d2ff"/><stop offset="0.400" stop-color="#ebd1ff"/><stop offset="0.467" stop-color="#f6d1ff"/><stop offset="0.533" stop-color="#ffcefc"/><stop offset="0.600" stop-color="#ffc5f2"/><stop offset="0.667" stop-color="#ffbce8"/><stop offset="0.733" stop-color="#ffb4de"/><stop offset="0.800" stop-color="#ffadd5"/><stop offset="0.867" stop-color="#ffa6cd"/><stop offset="0.933" stop-color="#ff9fc5"/><stop offset="1.000" stop-color="#ff98be"/></linearGradient><linearGradient id="cie72"><stop offset="0.000" stop-color="#add2ff"/><stop offset="0.067" stop-color="#b7d2ff"/><stop offset="0.133" stop-color="#c1d2ff"/><stop offset="0.200" stop-color="#cbd1ff"/><stop offset="0.267" stop-color="#d6d1ff"/><stop offset="0.333" stop-color="#e0d0ff"/><stop offset="0.400" stop-color="#ebd0ff"/><stop offset="0.467" stop-color="#f6cfff"/><stop offset="0.533" stop-color="#ffcdfd"/><stop offset="0.600" stop-color="#ffc4f2"/><stop offset="0.667" stop-color="#ffbbe8"/><stop offset="0.733" stop-color="#ffb3de"/><stop offset="0.800" stop-color="#ffacd6"/><stop offset="0.867" stop-color="#ffa5cd"/><stop offset="0.933" stop-color="#ff9ec5"/><stop offset="1.000" stop-color="#ff98be"/></linearGradient><linearGradient id="cie73"><stop offset="0.000" stop-color="#add1ff"/><stop offset="0.067" stop-color="#b7d1ff"/><stop offset="0.133" stop-color="#c1d0ff"/><stop offset="0.200" stop-color="#cbd0ff"/><stop offset="0.267" stop-color="#d6cfff"/><stop offset="0.333" stop-color="#e0cfff"/><stop offset="0.400" stop-color="#ebcfff"/><stop offset="0.467" stop-color="#f6ceff"/><stop offset="0.533" stop-color="#ffccfd"/><stop offset="0.600" stop-color="#ffc3f2"/><stop offset="0.667" stop-color="#ffbae8"/><stop offset="0.733" stop-color="#ffb2df"/><stop offset="0.800" stop-color="#ffabd6"/><stop offset="0.867" stop-color="#ffa4cd"/><stop offset="0.933" stop-color="#ff9dc6"/><stop offset="1.000" stop-color="#ff97be"/></linearGradient><linearGradient id="cie74"><stop offset="0.000" stop-color="#add0ff"/><stop offset="0.067" stop-color="#b7d0ff"/><stop offset="0.133" stop-color="#c1cfff"/><stop offset="0.200" stop-color="#cbcfff"/><stop offset="0.267" stop-color="#d6ceff"/><stop offset="0.333" stop-color="#e0ceff"/><stop offset="0.400" stop-color="#ebcdff"/><stop offset="0.467" stop-color="#f6cdff"/><stop offset="0.533" stop-color="#ffcbfd"/><stop offset="0.600" stop-color="#ffc2f2"/><stop offset="0.667" stop-color="#ffb9e8"/><stop offset="0.733" stop-color="#ffb1df"/><stop offset="0.800" stop-color="#ffaad6"/><stop offset="0.867" stop-color="#ffa3ce"/><stop offset="0.933" stop-color="#ff9cc6"/><stop offset="1.000" stop-color="#ff96be"/></linearGradient><linearGradient id="cie75"><stop offset="0.000" stop-color="#adcfff"/><stop offset="0.067" stop-color="#b7ceff"/><stop offset="0.133" stop-color="#c1ceff"/><stop offset="0.200" stop-color="#cbcdff"/><stop offset="0.267" stop-color="#d6cdff"/><stop offset="0.333" stop-color="#e0cdff"/><stop offset="0.400" stop-color="#ebccff"/><stop offset="0.467" stop-color="#f6ccff"/><stop offset="0.533" stop-color="#ffc9fd"/><stop offset="0.600" stop-color="#ffc0f2"/><stop offset="0.667" stop-color="#ffb8e8"/><stop offset="0.733" stop-color="#ffb0df"/><stop offset="0.800" stop-color="#ffa9d6"/><stop offset="0.867" stop-color="#ffa2ce"/><stop offset="0.933" stop-color="#ff9bc6"/><stop offset="1.000" stop-color="#ff95bf"/></linearGradient><linearGradient id="cie76"><stop offset="0.000" stop-color="#adceff"/><stop offset="0.067" stop-color="#b7cdff"/><stop offset="0.133" stop-color="#c1cdff"/><stop offset="0.200" stop-color="#cbccff"/><stop offset="0.267" stop-color="#d6ccff"/><stop offset="0.333" stop-color="#e0cbff"/><stop offset="0.400" stop-color="#ebcbff"/><stop offset="0.467" stop-color="#f6caff"/><stop offset="0.533" stop-color="#ffc8fd"/><stop offset="0.600" stop-color="#ffbff2"/><stop offset="0.667" stop-color="#ffb7e8"/><stop offset="0.733" stop-color="#ffafdf"/><stop offset="0.800" stop-color="#ffa8d6"/><stop offset="0.867" stop-color="#ffa1ce"/><stop offset="0.933" stop-color="#ff9ac6"/><stop offset="1.000" stop-color="#ff94bf"/></linearGradient><linearGradient id="cie77"><stop offset="0.000" stop-color="#aecdff"/><stop offset="0.067" stop-color="#b7ccff"/><stop offset="0.133" stop-color="#c1ccff"/><stop offset="0.200" stop-color="#cbcbff"/><stop offset="0.267" stop-color="#d6cbff"/><stop offset="0.333" stop-color="#e0caff"/><stop offset="0.400" stop-color="#ebcaff"/><stop offset="0.467" stop-color="#f6c9ff"/><stop offset="0.533" stop-color="#ffc7fd"/><stop offset="0.600" stop-color="#ffbef2"/><stop offset="0.667" stop-color="#ffb6e8"/><stop offset="0.733" stop-color="#ffaedf"/><stop offset="0.800" stop-color="#ffa7d6"/><stop offset="0.867" stop-color="#ffa0ce"/><stop offset="0.933" stop-color="#ff99c6"/><stop offset="1.000" stop-color="#ff93bf"/></linearGradient><linearGradient id="gHdr" x1="0" y1="0" x2="0" y2="1"><stop offset="0" stop-color="#1a1a1a"/><stop offset="1" stop-color="#101010"/></linearGradient><linearGradient id="gStrip" x1="0" y1="0" x2="0" y2="1"><stop offset="0" stop-color="#3c3c3c"/><stop offset="1" stop-color="#262626"/></linearGradient><linearGradient id="gSwBtn" x1="0" y1="0" x2="0" y2="1"><stop offset="0" stop-color="#a8a8a8"/><stop offset="0.12" stop-color="#8a8a8a"/><stop offset="1" stop-color="#5c5c5c"/></linearGradient><linearGradient id="gNav" x1="0" y1="0" x2="0" y2="1"><stop offset="0" stop-color="#b4b4b4"/><stop offset="1" stop-color="#8a8a8a"/></linearGradient><radialGradient id="gNavC" cx="0.5" cy="0.3" r="0.7"><stop offset="0" stop-color="#8a8a8a"/><stop offset="1" stop-color="#b8b8b8"/></radialGradient><linearGradient id="gIco" x1="0" y1="0" x2="0" y2="1"><stop offset="0" stop-color="#8c8c8c"/><stop offset="1" stop-color="#646464"/></linearGradient><linearGradient id="gEdge" x1="0" y1="0" x2="1" y2="0"><stop offset="0" stop-color="#000" stop-opacity="0"/><stop offset="1" stop-color="#000" stop-opacity="0.45"/></linearGradient></defs><rect x="0.00" y="0.00" width="2560.00" height="1552.00" fill="#323232" />
<rect x="0.00" y="0.00" width="2560.00" height="23.00" fill="#00c86e" />
<rect x="0.00" y="23.00" width="2560.00" height="65.00" fill="#1f1f1f" />
<path d="M0 58 H195 Q200 58 200 63 V1552 H0 Z" fill="#555555"/>
<rect x="200.00" y="88.00" width="1.00" height="1464.00" fill="#2a2a2a" />
<g transform="translate(10,11)"><path d="M0 -8 L4 -4 L0 0 L-4 -4Z" fill="#f5c400"/><path d="M-4 -4 L0 0 L-4 4 L-8 0Z" fill="#3cb3e8"/><path d="M4 -4 L8 0 L4 4 L0 0Z" fill="#7ac943"/><path d="M0 0 L4 4 L0 8 L-4 4Z" fill="#e8457a"/></g>
<text x="24.00" y="16.00" font-size="12" fill="#000" textLength="459.00" lengthAdjust="spacingAndGlyphs" >Calman 2025 Calman Ultimate for Business 323 Days Remaining  - Analysis/SDR Toolkit</text>
<line x1="2437.00" y1="10.50" x2="2449.00" y2="10.50" stroke="#000" stroke-width="1" />
<rect x="2483.5" y="7.5" width="9" height="9" fill="none" stroke="#000" stroke-width="1"/><path d="M2486.5 7.5 V5.5 H2495.5 V13.5 H2492.5" fill="none" stroke="#000" stroke-width="1"/>
<line x1="2529.00" y1="5.00" x2="2541.00" y2="17.00" stroke="#000" stroke-width="1.2" />
<line x1="2541.00" y1="5.00" x2="2529.00" y2="17.00" stroke="#000" stroke-width="1.2" />
<path d="M1 23 H183 V49 Q183 53 179 53 H5 Q1 53 1 49 Z" fill="url(#gRed)" stroke="#d9898b" stroke-width="0.8"/>
<path d="M34.5 26.099999999999998 L45.7 37.3 L34.5 48.5 L23.3 37.3Z" fill="none" stroke="#fff" stroke-width="2.5" stroke-linejoin="round"/>
<path d="M34.5 29.4 L37.6 32.5 L34.5 35.6 L31.4 32.5ZM29.7 34.199999999999996 L32.8 37.3 L29.7 40.4 L26.599999999999998 37.3ZM39.3 34.199999999999996 L42.4 37.3 L39.3 40.4 L36.199999999999996 37.3ZM34.5 39.0 L37.6 42.1 L34.5 45.2 L31.4 42.1Z" fill="#fff"/>
<text x="50.50" y="44.00" font-size="25.5" fill="#fff" textLength="84.50" lengthAdjust="spacingAndGlyphs" >calman</text>
<circle cx="166" cy="37" r="10" fill="url(#gRedBtn)"/>
<path d="M161.3 35.6 H170.5 L165.9 40.9Z" fill="#fff"/>
<rect x="190.00" y="35.00" width="2370.00" height="5.00" fill="url(#gRain)" />
<circle cx="19" cy="72.5" r="10" fill="url(#gKnob)"/>
<circle cx="18.5" cy="71.5" r="4.2" fill="url(#gDot)"/>
<circle cx="181" cy="72.5" r="10" fill="url(#gKnob)"/>
<path d="M184 67 V77.5 L178 72.2Z" fill="#fff"/>
<text x="9.00" y="100.50" font-size="12.5" fill="#ececec" textLength="64.00" lengthAdjust="spacingAndGlyphs" >SDR Toolkit</text>
<rect x="9.00" y="105.00" width="182.00" height="266.00" fill="#202020" />
<rect x="9.00" y="105.00" width="9.00" height="266.00" fill="url(#gTreeL)" />
<rect x="9.00" y="105.00" width="182.00" height="6.00" fill="url(#gTreeT)" />
<rect x="41.00" y="202.70" width="86.00" height="14.50" fill="url(#gSel)" />
<text x="30.00" y="124.00" font-size="11.3" fill="#f4f4f4" font-weight="bold" textLength="48.41" lengthAdjust="spacingAndGlyphs" >Welcome</text>
<text x="43.00" y="139.50" font-size="11.3" fill="#f4f4f4" textLength="43.60" lengthAdjust="spacingAndGlyphs" >Welcome</text>
<text x="43.00" y="154.00" font-size="11.3" fill="#f4f4f4" textLength="36.21" lengthAdjust="spacingAndGlyphs" >Options</text>
<text x="30.00" y="169.00" font-size="11.3" fill="#f4f4f4" font-weight="bold" textLength="45.55" lengthAdjust="spacingAndGlyphs" >Analysis</text>
<text x="43.00" y="185.00" font-size="11.3" fill="#f4f4f4" textLength="74.76" lengthAdjust="spacingAndGlyphs" >Dynamic Range</text>
<text x="43.00" y="199.00" font-size="11.3" fill="#f4f4f4" textLength="71.25" lengthAdjust="spacingAndGlyphs" >Grayscale - 2pt</text>
<text x="43.00" y="213.50" font-size="11.3" fill="#3a3a3a" textLength="78.83" lengthAdjust="spacingAndGlyphs" >Grayscale - Multi</text>
<text x="43.00" y="229.00" font-size="11.3" fill="#f4f4f4" textLength="59.57" lengthAdjust="spacingAndGlyphs" >Color Gamut</text>
<text x="43.00" y="243.30" font-size="11.3" fill="#f4f4f4" textLength="36.21" lengthAdjust="spacingAndGlyphs" >3D LUT</text>
<text x="43.00" y="258.00" font-size="11.3" fill="#f4f4f4" textLength="64.24" lengthAdjust="spacingAndGlyphs" >ColorChecker</text>
<text x="43.00" y="272.70" font-size="11.3" fill="#f4f4f4" textLength="88.21" lengthAdjust="spacingAndGlyphs" >Saturation Sweeps</text>
<text x="43.00" y="287.00" font-size="11.3" fill="#f4f4f4" textLength="91.71" lengthAdjust="spacingAndGlyphs" >Luminance Sweeps</text>
<text x="43.00" y="302.00" font-size="11.3" fill="#f4f4f4" textLength="42.05" lengthAdjust="spacingAndGlyphs" >Additivity</text>
<text x="43.00" y="316.80" font-size="11.3" fill="#f4f4f4" textLength="83.51" lengthAdjust="spacingAndGlyphs" >Screen Uniformity</text>
<text x="43.00" y="331.00" font-size="11.3" fill="#f4f4f4" textLength="82.36" lengthAdjust="spacingAndGlyphs" >Screen Angularity</text>
<text x="43.00" y="346.00" font-size="11.3" fill="#f4f4f4" textLength="73.01" lengthAdjust="spacingAndGlyphs" >Screen Stability</text>
<text x="43.00" y="361.00" font-size="11.3" fill="#f4f4f4" textLength="95.19" lengthAdjust="spacingAndGlyphs" >Spectral Power Dist.</text>
<path d="M23 121.5 L19 124.5 H23Z" fill="#555"/>
<path d="M23 166.5 L19 169.5 H23Z" fill="#555"/>
<path d="M200.5 88 V62 Q200.5 58.5 204 58.5 H288 Q291.5 58.5 291.5 62 V88" fill="#383838" stroke="#7a7a7a" stroke-width="1"/>
<rect x="200.00" y="87.00" width="92.00" height="1.50" fill="#262626" />
<rect x="257.50" y="59.00" width="1.00" height="29.00" fill="#666" />
<text x="206.50" y="78.30" font-size="12" fill="#ececec" textLength="46.00" lengthAdjust="spacingAndGlyphs" >History 1</text>
<circle cx="274" cy="74.5" r="9.5" fill="#333"/>
<path d="M274 70.5 V78.5 M270 74.5 H278" stroke="#888" stroke-width="1"/>
<path d="M2068 88 V61 Q2068 58.5 2071 58.5 H2208 Q2211 58.5 2211 61 V88Z" fill="url(#gCtl)" stroke="#777" stroke-width="0.6"/>
<rect x="2068.00" y="59.00" width="5.00" height="29.00" fill="#22dd22" />
<path d="M2217 88 V61 Q2217 58.5 2220 58.5 H2344 Q2347 58.5 2347 61 V88Z" fill="url(#gCtl)" stroke="#777" stroke-width="0.6"/>
<rect x="2217.00" y="59.00" width="5.00" height="29.00" fill="#e6e600" />
<path d="M2353 88 V61 Q2353 58.5 2356 58.5 H2493 Q2496 58.5 2496 61 V88Z" fill="url(#gCtl)" stroke="#777" stroke-width="0.6"/>
<rect x="2353.00" y="59.00" width="5.00" height="29.00" fill="#e6e600" />
<rect x="2175.00" y="60.00" width="1.20" height="28.00" fill="#4a4a4a" />
<circle cx="2156" cy="73.5" r="10" fill="url(#gCtlBtn)"/>
<path d="M2150.5 70.5 H2161.5 L2156 76.5Z" fill="#fff"/>
<circle cx="2332" cy="73.5" r="10" fill="url(#gCtlBtn)"/>
<path d="M2326.5 70.5 H2337.5 L2332 76.5Z" fill="#fff"/>
<circle cx="2479" cy="73.5" r="10" fill="url(#gCtlBtn)"/>
<path d="M2473.5 70.5 H2484.5 L2479 76.5Z" fill="#fff"/>
<circle cx="2195.5" cy="72.7" r="13" fill="#0000f0" stroke="#fff" stroke-width="1.2"/>
<text x="2195.80" y="75.80" font-size="10" fill="#fff" text-anchor="middle" textLength="15.00" lengthAdjust="spacingAndGlyphs" >239</text>
<text x="2076.50" y="70.00" font-size="12" fill="#f0f0f0" textLength="66.00" lengthAdjust="spacingAndGlyphs" >X-Rite i1Pro 2</text>
<text x="2076.50" y="83.70" font-size="12" fill="#f0f0f0" textLength="54.00" lengthAdjust="spacingAndGlyphs" >Direct View</text>
<text x="2225.50" y="70.00" font-size="12" fill="#f0f0f0" textLength="34.00" lengthAdjust="spacingAndGlyphs" >Source</text>
<text x="2362.00" y="70.00" font-size="12" fill="#f0f0f0" textLength="105.00" lengthAdjust="spacingAndGlyphs" >Direct Display Control</text>
<rect x="2499.5" y="58.5" width="33" height="28" rx="3.5" fill="url(#gBtn2)" stroke="#dcdcdc" stroke-width="1.3"/>
<rect x="2534" y="58.5" width="30" height="28" rx="3.5" fill="url(#gBtn2)" stroke="#dcdcdc" stroke-width="1.3"/>
<circle cx="2516.2" cy="72.2" r="9.4" fill="url(#gBtnC)"/>
<circle cx="2547.5" cy="72.2" r="9.4" fill="url(#gBtnC)"/>
<path d="M2516.20,65.60 L2517.85,68.03 L2520.73,67.47 L2520.17,70.35 L2522.60,72.00 L2520.17,73.65 L2520.73,76.53 L2517.85,75.97 L2516.20,78.40 L2514.55,75.97 L2511.67,76.53 L2512.23,73.65 L2509.80,72.00 L2512.23,70.35 L2511.67,67.47 L2514.55,68.03Z M2519 72 A2.8 2.8 0 1 0 2513.4 72 A2.8 2.8 0 1 0 2519 72Z" fill="#e6e6e6" fill-rule="evenodd"/>
<path d="M2549.6 66.8 V76.2 L2544.2 71.6Z" fill="#fff"/>
<text x="212.00" y="282.00" font-size="60" fill="#f0f0f0" textLength="425.00" lengthAdjust="spacingAndGlyphs" >Grayscale - Multi</text>
<text x="508.00" y="347.50" font-size="29" fill="#f0f0f0" text-anchor="end" textLength="152.00" lengthAdjust="spacingAndGlyphs" >dE Formula:</text>
<rect x="519.00" y="318.50" width="211.00" height="37.00" fill="#262626" />
<rect x="521.00" y="320.00" width="207.00" height="34.00" fill="url(#gCombo)" />
<text x="526.50" y="348.20" font-size="22" fill="#f0f0f0" textLength="49.00" lengthAdjust="spacingAndGlyphs" >2000</text>
<path d="M708 334 H722 L715 341.5Z" fill="#000"/>
<text x="466.00" y="393.00" font-size="19.7" fill="#d4d4d4" text-anchor="middle" textLength="111.00" lengthAdjust="spacingAndGlyphs" >DeltaE 2000</text>
<rect x="273.00" y="402.00" width="428.00" height="323.00" fill="#212121" />
<rect x="327.30" y="402.00" width="2.00" height="323.00" fill="#8e8e8e" />
<rect x="384.60" y="402.00" width="2.00" height="323.00" fill="#8e8e8e" />
<rect x="441.90" y="402.00" width="2.00" height="323.00" fill="#8e8e8e" />
<rect x="499.20" y="402.00" width="2.00" height="323.00" fill="#8e8e8e" />
<rect x="556.50" y="402.00" width="2.00" height="323.00" fill="#8e8e8e" />
<rect x="613.80" y="402.00" width="2.00" height="323.00" fill="#8e8e8e" />
<rect x="671.10" y="402.00" width="2.00" height="323.00" fill="#8e8e8e" />
<rect x="273.00" y="403.80" width="91.45" height="23.00" fill="#000" />
<rect x="274.00" y="405.80" width="88.45" height="19.00" fill="url(#gDE100)" />
<rect x="273.00" y="433.35" width="154.55" height="23.00" fill="#000" />
<rect x="274.00" y="435.35" width="151.55" height="19.00" fill="url(#gDE90)" />
<rect x="273.00" y="462.89" width="161.66" height="23.00" fill="#000" />
<rect x="274.00" y="464.89" width="158.66" height="19.00" fill="url(#gDE80)" />
<rect x="273.00" y="492.44" width="153.89" height="23.00" fill="#000" />
<rect x="274.00" y="494.44" width="150.89" height="19.00" fill="url(#gDE70)" />
<rect x="273.00" y="521.98" width="140.84" height="23.00" fill="#000" />
<rect x="274.00" y="523.98" width="137.84" height="19.00" fill="url(#gDE60)" />
<rect x="273.00" y="551.53" width="124.32" height="23.00" fill="#000" />
<rect x="274.00" y="553.53" width="121.32" height="19.00" fill="url(#gDE50)" />
<rect x="273.00" y="581.07" width="103.45" height="23.00" fill="#000" />
<rect x="274.00" y="583.07" width="100.45" height="19.00" fill="url(#gDE40)" />
<rect x="273.00" y="610.62" width="81.80" height="23.00" fill="#000" />
<rect x="274.00" y="612.62" width="78.80" height="19.00" fill="url(#gDE30)" />
<rect x="273.00" y="640.16" width="59.08" height="23.00" fill="#000" />
<rect x="274.00" y="642.16" width="56.08" height="19.00" fill="url(#gDE20)" />
<rect x="273.00" y="669.71" width="45.69" height="23.00" fill="#000" />
<rect x="274.00" y="671.71" width="42.69" height="19.00" fill="url(#gDE10)" />
<rect x="273.00" y="699.25" width="34.78" height="23.00" fill="#000" />
<rect x="274.00" y="701.25" width="31.78" height="19.00" fill="url(#gDE0)" />
<rect x="271.00" y="400.00" width="432.00" height="2.00" fill="#9a9a9a" />
<rect x="271.00" y="725.00" width="432.00" height="2.00" fill="#9a9a9a" />
<rect x="271.00" y="400.00" width="2.00" height="327.00" fill="#9a9a9a" />
<rect x="701.00" y="400.00" width="2.00" height="327.00" fill="#9a9a9a" />
<rect x="263.00" y="400.00" width="8.00" height="2.00" fill="#e8e8e8" />
<rect x="263.00" y="429.55" width="8.00" height="2.00" fill="#e8e8e8" />
<rect x="263.00" y="459.09" width="8.00" height="2.00" fill="#e8e8e8" />
<rect x="263.00" y="488.64" width="8.00" height="2.00" fill="#e8e8e8" />
<rect x="263.00" y="518.18" width="8.00" height="2.00" fill="#e8e8e8" />
<rect x="263.00" y="547.73" width="8.00" height="2.00" fill="#e8e8e8" />
<rect x="263.00" y="577.27" width="8.00" height="2.00" fill="#e8e8e8" />
<rect x="263.00" y="606.82" width="8.00" height="2.00" fill="#e8e8e8" />
<rect x="263.00" y="636.36" width="8.00" height="2.00" fill="#e8e8e8" />
<rect x="263.00" y="665.91" width="8.00" height="2.00" fill="#e8e8e8" />
<rect x="263.00" y="695.45" width="8.00" height="2.00" fill="#e8e8e8" />
<rect x="263.00" y="725.00" width="8.00" height="2.00" fill="#e8e8e8" />
<text x="263.00" y="423.27" font-size="21.5" fill="#e4e4e4" text-anchor="end" textLength="33.36" lengthAdjust="spacingAndGlyphs" >100</text>
<text x="263.00" y="452.82" font-size="21.5" fill="#e4e4e4" text-anchor="end" textLength="22.24" lengthAdjust="spacingAndGlyphs" >90</text>
<text x="263.00" y="482.36" font-size="21.5" fill="#e4e4e4" text-anchor="end" textLength="22.24" lengthAdjust="spacingAndGlyphs" >80</text>
<text x="263.00" y="511.91" font-size="21.5" fill="#e4e4e4" text-anchor="end" textLength="22.24" lengthAdjust="spacingAndGlyphs" >70</text>
<text x="263.00" y="541.45" font-size="21.5" fill="#e4e4e4" text-anchor="end" textLength="22.24" lengthAdjust="spacingAndGlyphs" >60</text>
<text x="263.00" y="571.00" font-size="21.5" fill="#e4e4e4" text-anchor="end" textLength="22.24" lengthAdjust="spacingAndGlyphs" >50</text>
<text x="263.00" y="600.55" font-size="21.5" fill="#e4e4e4" text-anchor="end" textLength="22.24" lengthAdjust="spacingAndGlyphs" >40</text>
<text x="263.00" y="630.09" font-size="21.5" fill="#e4e4e4" text-anchor="end" textLength="22.24" lengthAdjust="spacingAndGlyphs" >30</text>
<text x="263.00" y="659.64" font-size="21.5" fill="#e4e4e4" text-anchor="end" textLength="22.24" lengthAdjust="spacingAndGlyphs" >20</text>
<text x="263.00" y="689.18" font-size="21.5" fill="#e4e4e4" text-anchor="end" textLength="22.24" lengthAdjust="spacingAndGlyphs" >10</text>
<text x="263.00" y="718.73" font-size="21.5" fill="#e4e4e4" text-anchor="end" textLength="11.12" lengthAdjust="spacingAndGlyphs" >0</text>
<rect x="271.00" y="727.00" width="2.00" height="7.00" fill="#e8e8e8" />
<text x="272.00" y="755.50" font-size="21.5" fill="#e4e4e4" text-anchor="middle" textLength="11.12" lengthAdjust="spacingAndGlyphs" >0</text>
<rect x="327.30" y="727.00" width="2.00" height="7.00" fill="#e8e8e8" />
<text x="328.30" y="755.50" font-size="21.5" fill="#e4e4e4" text-anchor="middle" textLength="11.12" lengthAdjust="spacingAndGlyphs" >2</text>
<rect x="384.60" y="727.00" width="2.00" height="7.00" fill="#e8e8e8" />
<text x="385.60" y="755.50" font-size="21.5" fill="#e4e4e4" text-anchor="middle" textLength="11.12" lengthAdjust="spacingAndGlyphs" >4</text>
<rect x="441.90" y="727.00" width="2.00" height="7.00" fill="#e8e8e8" />
<text x="442.90" y="755.50" font-size="21.5" fill="#e4e4e4" text-anchor="middle" textLength="11.12" lengthAdjust="spacingAndGlyphs" >6</text>
<rect x="499.20" y="727.00" width="2.00" height="7.00" fill="#e8e8e8" />
<text x="500.20" y="755.50" font-size="21.5" fill="#e4e4e4" text-anchor="middle" textLength="11.12" lengthAdjust="spacingAndGlyphs" >8</text>
<rect x="556.50" y="727.00" width="2.00" height="7.00" fill="#e8e8e8" />
<text x="557.50" y="755.50" font-size="21.5" fill="#e4e4e4" text-anchor="middle" textLength="22.24" lengthAdjust="spacingAndGlyphs" >10</text>
<rect x="613.80" y="727.00" width="2.00" height="7.00" fill="#e8e8e8" />
<text x="614.80" y="755.50" font-size="21.5" fill="#e4e4e4" text-anchor="middle" textLength="22.24" lengthAdjust="spacingAndGlyphs" >12</text>
<rect x="671.10" y="727.00" width="2.00" height="7.00" fill="#e8e8e8" />
<text x="672.10" y="755.50" font-size="21.5" fill="#e4e4e4" text-anchor="middle" textLength="22.24" lengthAdjust="spacingAndGlyphs" >14</text>
<text x="1183.00" y="268.00" font-size="19.7" fill="#d4d4d4" text-anchor="middle" textLength="117.00" lengthAdjust="spacingAndGlyphs" >RGB Balance</text>
<rect x="802.00" y="277.00" width="804.00" height="448.00" fill="#212121" />
<rect x="802.00" y="321.00" width="804.00" height="2.00" fill="#8e8e8e" />
<rect x="792.00" y="321.00" width="8.00" height="2.00" fill="#e8e8e8" />
<text x="791.00" y="329.50" font-size="21.5" fill="#e4e4e4" text-anchor="end" textLength="33.36" lengthAdjust="spacingAndGlyphs" >104</text>
<rect x="802.00" y="411.00" width="804.00" height="2.00" fill="#8e8e8e" />
<rect x="792.00" y="411.00" width="8.00" height="2.00" fill="#e8e8e8" />
<text x="791.00" y="419.50" font-size="21.5" fill="#e4e4e4" text-anchor="end" textLength="33.36" lengthAdjust="spacingAndGlyphs" >102</text>
<rect x="802.00" y="501.00" width="804.00" height="2.00" fill="#8e8e8e" />
<rect x="792.00" y="501.00" width="8.00" height="2.00" fill="#e8e8e8" />
<text x="791.00" y="509.50" font-size="21.5" fill="#e4e4e4" text-anchor="end" textLength="33.36" lengthAdjust="spacingAndGlyphs" >100</text>
<rect x="802.00" y="591.00" width="804.00" height="2.00" fill="#8e8e8e" />
<rect x="792.00" y="591.00" width="8.00" height="2.00" fill="#e8e8e8" />
<text x="791.00" y="599.50" font-size="21.5" fill="#e4e4e4" text-anchor="end" textLength="22.24" lengthAdjust="spacingAndGlyphs" >98</text>
<rect x="802.00" y="681.00" width="804.00" height="2.00" fill="#8e8e8e" />
<rect x="792.00" y="681.00" width="8.00" height="2.00" fill="#e8e8e8" />
<text x="791.00" y="689.50" font-size="21.5" fill="#e4e4e4" text-anchor="end" textLength="22.24" lengthAdjust="spacingAndGlyphs" >96</text>
<clipPath id="cpL"><rect x="802" y="277" width="804" height="448"/></clipPath>
<polyline points="801.0,477.7 881.6,609.1 962.2,557.4 1042.8,520.0 1123.4,499.3 1204.0,488.0 1284.6,479.0 1365.2,471.0 1445.8,468.2 1526.4,475.4 1607.0,483.1" fill="none" stroke="#008000" stroke-width="4" stroke-linejoin="round" clip-path="url(#cpL)"/>
<polyline points="801.0,485.8 881.6,625.3 962.2,576.3 1042.8,539.3 1123.4,523.6 1204.0,517.7 1284.6,511.9 1365.2,507.4 1445.8,509.2 1526.4,520.9 1607.0,536.6" fill="none" stroke="#ff0000" stroke-width="4" stroke-linejoin="round" clip-path="url(#cpL)"/>
<polyline points="801.0,441.3 881.6,604.1 962.2,605.5 1042.8,600.5 1123.4,606.0 1204.0,619.0 1284.6,630.7 1365.2,637.9 1445.8,643.8 1526.4,639.2 1607.0,557.4" fill="none" stroke="#0000ff" stroke-width="4" stroke-linejoin="round" clip-path="url(#cpL)"/>
<rect x="800.00" y="275.00" width="808.00" height="2.00" fill="#9a9a9a" />
<rect x="800.00" y="725.00" width="808.00" height="2.00" fill="#9a9a9a" />
<rect x="800.00" y="275.00" width="2.00" height="452.00" fill="#9a9a9a" />
<rect x="1606.00" y="275.00" width="2.00" height="452.00" fill="#9a9a9a" />
<rect x="800.00" y="727.00" width="2.00" height="7.00" fill="#e8e8e8" />
<text x="801.00" y="755.50" font-size="21.5" fill="#e4e4e4" text-anchor="middle" textLength="11.12" lengthAdjust="spacingAndGlyphs" >0</text>
<rect x="880.60" y="727.00" width="2.00" height="7.00" fill="#e8e8e8" />
<text x="881.60" y="755.50" font-size="21.5" fill="#e4e4e4" text-anchor="middle" textLength="22.24" lengthAdjust="spacingAndGlyphs" >10</text>
<rect x="961.20" y="727.00" width="2.00" height="7.00" fill="#e8e8e8" />
<text x="962.20" y="755.50" font-size="21.5" fill="#e4e4e4" text-anchor="middle" textLength="22.24" lengthAdjust="spacingAndGlyphs" >20</text>
<rect x="1041.80" y="727.00" width="2.00" height="7.00" fill="#e8e8e8" />
<text x="1042.80" y="755.50" font-size="21.5" fill="#e4e4e4" text-anchor="middle" textLength="22.24" lengthAdjust="spacingAndGlyphs" >30</text>
<rect x="1122.40" y="727.00" width="2.00" height="7.00" fill="#e8e8e8" />
<text x="1123.40" y="755.50" font-size="21.5" fill="#e4e4e4" text-anchor="middle" textLength="22.24" lengthAdjust="spacingAndGlyphs" >40</text>
<rect x="1203.00" y="727.00" width="2.00" height="7.00" fill="#e8e8e8" />
<text x="1204.00" y="755.50" font-size="21.5" fill="#e4e4e4" text-anchor="middle" textLength="22.24" lengthAdjust="spacingAndGlyphs" >50</text>
<rect x="1283.60" y="727.00" width="2.00" height="7.00" fill="#e8e8e8" />
<text x="1284.60" y="755.50" font-size="21.5" fill="#e4e4e4" text-anchor="middle" textLength="22.24" lengthAdjust="spacingAndGlyphs" >60</text>
<rect x="1364.20" y="727.00" width="2.00" height="7.00" fill="#e8e8e8" />
<text x="1365.20" y="755.50" font-size="21.5" fill="#e4e4e4" text-anchor="middle" textLength="22.24" lengthAdjust="spacingAndGlyphs" >70</text>
<rect x="1444.80" y="727.00" width="2.00" height="7.00" fill="#e8e8e8" />
<text x="1445.80" y="755.50" font-size="21.5" fill="#e4e4e4" text-anchor="middle" textLength="22.24" lengthAdjust="spacingAndGlyphs" >80</text>
<rect x="1525.40" y="727.00" width="2.00" height="7.00" fill="#e8e8e8" />
<text x="1526.40" y="755.50" font-size="21.5" fill="#e4e4e4" text-anchor="middle" textLength="22.24" lengthAdjust="spacingAndGlyphs" >90</text>
<rect x="1606.00" y="727.00" width="2.00" height="7.00" fill="#e8e8e8" />
<text x="1607.00" y="755.50" font-size="21.5" fill="#e4e4e4" text-anchor="middle" textLength="33.36" lengthAdjust="spacingAndGlyphs" >100</text>
<text x="1764.00" y="268.00" font-size="19.7" fill="#d4d4d4" text-anchor="middle" textLength="117.00" lengthAdjust="spacingAndGlyphs" >RGB Balance</text>
<rect x="1697.00" y="277.00" width="179.00" height="455.00" fill="#212121" />
<rect x="1697.00" y="323.00" width="179.00" height="2.00" fill="#8e8e8e" />
<rect x="1687.00" y="323.00" width="8.00" height="2.00" fill="#e8e8e8" />
<text x="1686.00" y="331.50" font-size="21.5" fill="#e4e4e4" text-anchor="end" textLength="33.36" lengthAdjust="spacingAndGlyphs" >104</text>
<rect x="1697.00" y="414.50" width="179.00" height="2.00" fill="#8e8e8e" />
<rect x="1687.00" y="414.50" width="8.00" height="2.00" fill="#e8e8e8" />
<text x="1686.00" y="423.00" font-size="21.5" fill="#e4e4e4" text-anchor="end" textLength="33.36" lengthAdjust="spacingAndGlyphs" >102</text>
<rect x="1697.00" y="506.00" width="179.00" height="2.00" fill="#8e8e8e" />
<rect x="1687.00" y="506.00" width="8.00" height="2.00" fill="#e8e8e8" />
<text x="1686.00" y="514.50" font-size="21.5" fill="#e4e4e4" text-anchor="end" textLength="33.36" lengthAdjust="spacingAndGlyphs" >100</text>
<rect x="1697.00" y="597.50" width="179.00" height="2.00" fill="#8e8e8e" />
<rect x="1687.00" y="597.50" width="8.00" height="2.00" fill="#e8e8e8" />
<text x="1686.00" y="606.00" font-size="21.5" fill="#e4e4e4" text-anchor="end" textLength="22.24" lengthAdjust="spacingAndGlyphs" >98</text>
<rect x="1697.00" y="689.00" width="179.00" height="2.00" fill="#8e8e8e" />
<rect x="1687.00" y="689.00" width="8.00" height="2.00" fill="#e8e8e8" />
<text x="1686.00" y="697.50" font-size="21.5" fill="#e4e4e4" text-anchor="end" textLength="22.24" lengthAdjust="spacingAndGlyphs" >96</text>
<rect x="1712.00" y="543.00" width="49.00" height="190.00" fill="#000" />
<rect x="1714.00" y="545.00" width="45.00" height="188.00" fill="url(#gBR)" />
<rect x="1760.00" y="489.00" width="50.00" height="244.00" fill="#000" />
<rect x="1762.00" y="491.00" width="46.00" height="242.00" fill="url(#gBG)" />
<rect x="1808.00" y="563.00" width="49.00" height="170.00" fill="#000" />
<rect x="1810.00" y="565.00" width="45.00" height="168.00" fill="url(#gBB)" />
<rect x="1695.00" y="275.00" width="183.00" height="2.00" fill="#9a9a9a" />
<rect x="1695.00" y="732.00" width="183.00" height="2.00" fill="#9a9a9a" />
<rect x="1695.00" y="275.00" width="2.00" height="459.00" fill="#9a9a9a" />
<rect x="1876.00" y="275.00" width="2.00" height="459.00" fill="#9a9a9a" />
<rect x="1695.00" y="734.00" width="2.00" height="8.00" fill="#e8e8e8" />
<rect x="1876.00" y="734.00" width="2.00" height="8.00" fill="#e8e8e8" />
<text x="1786.00" y="755.50" font-size="21.5" fill="#e4e4e4" text-anchor="middle" textLength="33.36" lengthAdjust="spacingAndGlyphs" >100</text>
<text x="2222.00" y="268.00" font-size="19.7" fill="#d4d4d4" text-anchor="middle" textLength="145.00" lengthAdjust="spacingAndGlyphs" >Gamma Log/Log</text>
<rect x="1961.00" y="277.00" width="559.00" height="448.00" fill="#212121" />
<rect x="1961.00" y="275.70" width="559.00" height="2.00" fill="#8e8e8e" />
<rect x="1951.00" y="275.70" width="8.00" height="2.00" fill="#e8e8e8" />
<text x="1950.50" y="284.20" font-size="21.5" fill="#e4e4e4" text-anchor="end" textLength="27.79" lengthAdjust="spacingAndGlyphs" >2.8</text>
<rect x="1961.00" y="365.50" width="559.00" height="2.00" fill="#8e8e8e" />
<rect x="1951.00" y="365.50" width="8.00" height="2.00" fill="#e8e8e8" />
<text x="1950.50" y="374.00" font-size="21.5" fill="#e4e4e4" text-anchor="end" textLength="27.79" lengthAdjust="spacingAndGlyphs" >2.6</text>
<rect x="1961.00" y="455.30" width="559.00" height="2.00" fill="#8e8e8e" />
<rect x="1951.00" y="455.30" width="8.00" height="2.00" fill="#e8e8e8" />
<text x="1950.50" y="463.80" font-size="21.5" fill="#e4e4e4" text-anchor="end" textLength="27.79" lengthAdjust="spacingAndGlyphs" >2.4</text>
<rect x="1961.00" y="545.10" width="559.00" height="2.00" fill="#8e8e8e" />
<rect x="1951.00" y="545.10" width="8.00" height="2.00" fill="#e8e8e8" />
<text x="1950.50" y="553.60" font-size="21.5" fill="#e4e4e4" text-anchor="end" textLength="27.79" lengthAdjust="spacingAndGlyphs" >2.2</text>
<rect x="1961.00" y="634.90" width="559.00" height="2.00" fill="#8e8e8e" />
<rect x="1951.00" y="634.90" width="8.00" height="2.00" fill="#e8e8e8" />
<text x="1950.50" y="643.40" font-size="21.5" fill="#e4e4e4" text-anchor="end" textLength="11.12" lengthAdjust="spacingAndGlyphs" >2</text>
<rect x="1961.00" y="724.70" width="559.00" height="2.00" fill="#8e8e8e" />
<rect x="1951.00" y="724.70" width="8.00" height="2.00" fill="#e8e8e8" />
<text x="1950.50" y="733.20" font-size="21.5" fill="#e4e4e4" text-anchor="end" textLength="27.79" lengthAdjust="spacingAndGlyphs" >1.8</text>
<clipPath id="cpG"><rect x="1961" y="277" width="559" height="448"/></clipPath>
<polyline points="1960.0,960.2 2016.1,572.1 2072.1,550.2 2128.2,544.1 2184.2,537.9 2240.3,532.4 2296.4,530.2 2352.4,531.2 2408.5,532.7 2464.5,522.8 2520.6,512.5" fill="none" stroke="#8a8a8a" stroke-width="4" stroke-linejoin="round" clip-path="url(#cpG)"/>
<polyline points="1974.0,777.6 1976.8,757.0 1979.6,739.8 1982.4,725.1 1985.2,712.3 1988.0,701.0 1990.8,691.1 1993.6,682.1 1996.4,674.0 1999.2,666.7 2002.0,660.0 2004.8,653.8 2007.7,648.2 2010.5,642.9 2013.3,638.1 2016.1,633.5 2018.9,629.3 2021.7,625.3 2024.5,621.6 2027.3,618.0 2030.1,614.7 2032.9,611.6 2035.7,608.6 2038.5,605.8 2041.3,603.1 2044.1,600.6 2046.9,598.1 2049.7,595.8 2052.5,593.6 2055.3,591.5 2058.1,589.4 2060.9,587.5 2063.7,585.6 2066.5,583.8 2069.3,582.1 2072.1,580.4 2083.3,574.3 2094.5,569.0 2105.8,564.3 2117.0,560.1 2128.2,556.4 2139.4,553.0 2150.6,550.0 2161.8,547.2 2173.0,544.6 2184.2,542.2 2195.5,540.1 2206.7,538.0 2217.9,536.1 2229.1,534.4 2240.3,532.7 2251.5,531.2 2262.7,529.7 2273.9,528.4 2285.1,527.1 2296.4,525.8 2307.6,524.7 2318.8,523.5 2330.0,522.5 2341.2,521.5 2352.4,520.5 2363.6,519.6 2374.8,518.7 2386.1,517.9 2397.3,517.1 2408.5,516.3 2419.7,515.6 2430.9,514.9 2442.1,514.2 2453.3,513.5 2464.5,512.9 2475.8,512.3 2487.0,511.7 2498.2,511.1 2509.4,510.5 2520.6,510.0" fill="none" stroke="#ffff00" stroke-width="4" stroke-linejoin="round" clip-path="url(#cpG)"/>
<rect x="1959.00" y="275.00" width="563.00" height="2.00" fill="#9a9a9a" />
<rect x="1959.00" y="725.00" width="563.00" height="2.00" fill="#9a9a9a" />
<rect x="1959.00" y="275.00" width="2.00" height="452.00" fill="#9a9a9a" />
<rect x="2520.00" y="275.00" width="2.00" height="452.00" fill="#9a9a9a" />
<rect x="1959.00" y="727.00" width="2.00" height="7.00" fill="#e8e8e8" />
<text x="1960.00" y="755.50" font-size="21.5" fill="#e4e4e4" text-anchor="middle" textLength="11.12" lengthAdjust="spacingAndGlyphs" >0</text>
<rect x="2071.12" y="727.00" width="2.00" height="7.00" fill="#e8e8e8" />
<text x="2072.12" y="755.50" font-size="21.5" fill="#e4e4e4" text-anchor="middle" textLength="22.24" lengthAdjust="spacingAndGlyphs" >20</text>
<rect x="2183.24" y="727.00" width="2.00" height="7.00" fill="#e8e8e8" />
<text x="2184.24" y="755.50" font-size="21.5" fill="#e4e4e4" text-anchor="middle" textLength="22.24" lengthAdjust="spacingAndGlyphs" >40</text>
<rect x="2295.36" y="727.00" width="2.00" height="7.00" fill="#e8e8e8" />
<text x="2296.36" y="755.50" font-size="21.5" fill="#e4e4e4" text-anchor="middle" textLength="22.24" lengthAdjust="spacingAndGlyphs" >60</text>
<rect x="2407.48" y="727.00" width="2.00" height="7.00" fill="#e8e8e8" />
<text x="2408.48" y="755.50" font-size="21.5" fill="#e4e4e4" text-anchor="middle" textLength="22.24" lengthAdjust="spacingAndGlyphs" >80</text>
<rect x="2519.60" y="727.00" width="2.00" height="7.00" fill="#e8e8e8" />
<text x="2520.60" y="755.50" font-size="21.5" fill="#e4e4e4" text-anchor="middle" textLength="33.36" lengthAdjust="spacingAndGlyphs" >100</text>
<text x="322.50" y="815.20" font-size="44" fill="#f0f0f0" textLength="305.00" lengthAdjust="spacingAndGlyphs" >Avg dE2000: 3.9</text>
<text x="903.50" y="815.20" font-size="44" fill="#f0f0f0" textLength="269.00" lengthAdjust="spacingAndGlyphs" >Avg CCT: 6250</text>
<text x="1435.00" y="815.20" font-size="44" fill="#f0f0f0" textLength="389.00" lengthAdjust="spacingAndGlyphs" >Contrast Ratio: 1736</text>
<text x="2000.00" y="815.20" font-size="44" fill="#f0f0f0" textLength="445.00" lengthAdjust="spacingAndGlyphs" >Average Gamma: 2.215</text>
<rect x="201.00" y="843.00" width="2357.00" height="185.00" fill="#000" />
<rect x="335.00" y="843.00" width="1.00" height="185.00" fill="#111" />
<rect x="2539.00" y="843.00" width="1.00" height="185.00" fill="#0a0a0a" />
<text transform="translate(355,908) rotate(-90)" font-size="19" fill="#f0f0f0" textLength="49" lengthAdjust="spacingAndGlyphs">Actual</text>
<text transform="translate(355,989) rotate(-90)" font-size="19" fill="#f0f0f0" textLength="49" lengthAdjust="spacingAndGlyphs">Target</text>
<rect x="367.00" y="851.00" width="171.00" height="145.00" fill="#f0f0f0" />
<rect x="369.00" y="853.00" width="167.00" height="71.00" fill="#05070c" />
<rect x="369.00" y="924.00" width="167.00" height="70.00" fill="rgb(0,0,0)" />
<text x="452.50" y="1016.30" font-size="17.5" fill="#f0f0f0" text-anchor="middle" textLength="9.25" lengthAdjust="spacingAndGlyphs" >0</text>
<rect x="565.70" y="851.00" width="171.00" height="145.00" fill="#f0f0f0" />
<rect x="567.70" y="853.00" width="167.00" height="71.00" fill="#161816" />
<rect x="567.70" y="924.00" width="167.00" height="70.00" fill="rgb(26,26,26)" />
<text x="651.20" y="1016.30" font-size="17.5" fill="#f0f0f0" text-anchor="middle" textLength="18.49" lengthAdjust="spacingAndGlyphs" >10</text>
<rect x="764.40" y="851.00" width="171.00" height="145.00" fill="#f0f0f0" />
<rect x="766.40" y="853.00" width="167.00" height="71.00" fill="#2e2e2c" />
<rect x="766.40" y="924.00" width="167.00" height="70.00" fill="rgb(51,51,51)" />
<text x="849.90" y="1016.30" font-size="17.5" fill="#f0f0f0" text-anchor="middle" textLength="18.49" lengthAdjust="spacingAndGlyphs" >20</text>
<rect x="963.10" y="851.00" width="171.00" height="145.00" fill="#f0f0f0" />
<rect x="965.10" y="853.00" width="167.00" height="71.00" fill="#4a4a45" />
<rect x="965.10" y="924.00" width="167.00" height="70.00" fill="rgb(76,76,76)" />
<text x="1048.60" y="1016.30" font-size="17.5" fill="#f0f0f0" text-anchor="middle" textLength="18.49" lengthAdjust="spacingAndGlyphs" >30</text>
<rect x="1161.80" y="851.00" width="171.00" height="145.00" fill="#f0f0f0" />
<rect x="1163.80" y="853.00" width="167.00" height="71.00" fill="#61625b" />
<rect x="1163.80" y="924.00" width="167.00" height="70.00" fill="rgb(102,102,102)" />
<text x="1247.30" y="1016.30" font-size="17.5" fill="#f0f0f0" text-anchor="middle" textLength="18.49" lengthAdjust="spacingAndGlyphs" >40</text>
<rect x="1360.50" y="851.00" width="171.00" height="145.00" fill="#f0f0f0" />
<rect x="1362.50" y="853.00" width="167.00" height="71.00" fill="#7b7c73" />
<rect x="1362.50" y="924.00" width="167.00" height="70.00" fill="rgb(128,128,128)" />
<text x="1446.00" y="1016.30" font-size="17.5" fill="#f0f0f0" text-anchor="middle" textLength="18.49" lengthAdjust="spacingAndGlyphs" >50</text>
<rect x="1559.20" y="851.00" width="171.00" height="145.00" fill="#f0f0f0" />
<rect x="1561.20" y="853.00" width="167.00" height="71.00" fill="#989890" />
<rect x="1561.20" y="924.00" width="167.00" height="70.00" fill="rgb(153,153,153)" />
<text x="1644.70" y="1016.30" font-size="17.5" fill="#f0f0f0" text-anchor="middle" textLength="18.49" lengthAdjust="spacingAndGlyphs" >60</text>
<rect x="1757.90" y="851.00" width="171.00" height="145.00" fill="#f0f0f0" />
<rect x="1759.90" y="853.00" width="167.00" height="71.00" fill="#b3b4aa" />
<rect x="1759.90" y="924.00" width="167.00" height="70.00" fill="rgb(178,178,178)" />
<text x="1843.40" y="1016.30" font-size="17.5" fill="#f0f0f0" text-anchor="middle" textLength="18.49" lengthAdjust="spacingAndGlyphs" >70</text>
<rect x="1956.60" y="851.00" width="171.00" height="145.00" fill="#f0f0f0" />
<rect x="1958.60" y="853.00" width="167.00" height="71.00" fill="#c9ccc2" />
<rect x="1958.60" y="924.00" width="167.00" height="70.00" fill="rgb(204,204,204)" />
<text x="2042.10" y="1016.30" font-size="17.5" fill="#f0f0f0" text-anchor="middle" textLength="18.49" lengthAdjust="spacingAndGlyphs" >80</text>
<rect x="2155.30" y="851.00" width="171.00" height="145.00" fill="#f0f0f0" />
<rect x="2157.30" y="853.00" width="167.00" height="71.00" fill="#e6e6e0" />
<rect x="2157.30" y="924.00" width="167.00" height="70.00" fill="rgb(230,230,230)" />
<text x="2240.80" y="1016.30" font-size="17.5" fill="#f0f0f0" text-anchor="middle" textLength="18.49" lengthAdjust="spacingAndGlyphs" >90</text>
<rect x="2354.00" y="851.00" width="171.00" height="145.00" fill="#f0f0f0" />
<rect x="2356.00" y="853.00" width="167.00" height="71.00" fill="#fdfffb" />
<rect x="2356.00" y="924.00" width="167.00" height="70.00" fill="rgb(255,255,255)" />
<text x="2439.50" y="1016.30" font-size="17.5" fill="#f0f0f0" text-anchor="middle" textLength="27.74" lengthAdjust="spacingAndGlyphs" >100</text>
<text x="231.00" y="1122.70" font-size="41.5" fill="#f0f0f0" textLength="308.00" lengthAdjust="spacingAndGlyphs" >Current Reading</text>
<text x="230.50" y="1182.00" font-size="34" fill="#f0f0f0" textLength="144.00" lengthAdjust="spacingAndGlyphs" >x: 0.3133</text>
<text x="442.50" y="1182.00" font-size="34" fill="#f0f0f0" textLength="144.00" lengthAdjust="spacingAndGlyphs" >y: 0.3335</text>
<text x="230.50" y="1229.80" font-size="34" fill="#f0f0f0" textLength="167.00" lengthAdjust="spacingAndGlyphs" >u': 0.1966</text>
<text x="442.50" y="1229.80" font-size="34" fill="#f0f0f0" textLength="153.00" lengthAdjust="spacingAndGlyphs" >v': 0.4708</text>
<text x="230.50" y="1278.30" font-size="34" fill="#f0f0f0" textLength="264.00" lengthAdjust="spacingAndGlyphs" >cd/m²: 321.3957</text>
<text x="230.50" y="1326.80" font-size="34" fill="#f0f0f0" textLength="217.00" lengthAdjust="spacingAndGlyphs" >ΔE 2000: 3.19</text>
<text x="869.00" y="1075.00" font-size="19.7" fill="#d4d4d4" text-anchor="middle" textLength="107.00" lengthAdjust="spacingAndGlyphs" >CIE 1931 xy</text>
<rect x="717.00" y="1083.00" width="354.00" height="3.30" fill="url(#cie0)" />
<rect x="717.00" y="1086.00" width="354.00" height="3.30" fill="url(#cie1)" />
<rect x="717.00" y="1089.00" width="354.00" height="3.30" fill="url(#cie2)" />
<rect x="717.00" y="1092.00" width="354.00" height="3.30" fill="url(#cie3)" />
<rect x="717.00" y="1095.00" width="354.00" height="3.30" fill="url(#cie4)" />
<rect x="717.00" y="1098.00" width="354.00" height="3.30" fill="url(#cie5)" />
<rect x="717.00" y="1101.00" width="354.00" height="3.30" fill="url(#cie6)" />
<rect x="717.00" y="1104.00" width="354.00" height="3.30" fill="url(#cie7)" />
<rect x="717.00" y="1107.00" width="354.00" height="3.30" fill="url(#cie8)" />
<rect x="717.00" y="1110.00" width="354.00" height="3.30" fill="url(#cie9)" />
<rect x="717.00" y="1113.00" width="354.00" height="3.30" fill="url(#cie10)" />
<rect x="717.00" y="1116.00" width="354.00" height="3.30" fill="url(#cie11)" />
<rect x="717.00" y="1119.00" width="354.00" height="3.30" fill="url(#cie12)" />
<rect x="717.00" y="1122.00" width="354.00" height="3.30" fill="url(#cie13)" />
<rect x="717.00" y="1125.00" width="354.00" height="3.30" fill="url(#cie14)" />
<rect x="717.00" y="1128.00" width="354.00" height="3.30" fill="url(#cie15)" />
<rect x="717.00" y="1131.00" width="354.00" height="3.30" fill="url(#cie16)" />
<rect x="717.00" y="1134.00" width="354.00" height="3.30" fill="url(#cie17)" />
<rect x="717.00" y="1137.00" width="354.00" height="3.30" fill="url(#cie18)" />
<rect x="717.00" y="1140.00" width="354.00" height="3.30" fill="url(#cie19)" />
<rect x="717.00" y="1143.00" width="354.00" height="3.30" fill="url(#cie20)" />
<rect x="717.00" y="1146.00" width="354.00" height="3.30" fill="url(#cie21)" />
<rect x="717.00" y="1149.00" width="354.00" height="3.30" fill="url(#cie22)" />
<rect x="717.00" y="1152.00" width="354.00" height="3.30" fill="url(#cie23)" />
<rect x="717.00" y="1155.00" width="354.00" height="3.30" fill="url(#cie24)" />
<rect x="717.00" y="1158.00" width="354.00" height="3.30" fill="url(#cie25)" />
<rect x="717.00" y="1161.00" width="354.00" height="3.30" fill="url(#cie26)" />
<rect x="717.00" y="1164.00" width="354.00" height="3.30" fill="url(#cie27)" />
<rect x="717.00" y="1167.00" width="354.00" height="3.30" fill="url(#cie28)" />
<rect x="717.00" y="1170.00" width="354.00" height="3.30" fill="url(#cie29)" />
<rect x="717.00" y="1173.00" width="354.00" height="3.30" fill="url(#cie30)" />
<rect x="717.00" y="1176.00" width="354.00" height="3.30" fill="url(#cie31)" />
<rect x="717.00" y="1179.00" width="354.00" height="3.30" fill="url(#cie32)" />
<rect x="717.00" y="1182.00" width="354.00" height="3.30" fill="url(#cie33)" />
<rect x="717.00" y="1185.00" width="354.00" height="3.30" fill="url(#cie34)" />
<rect x="717.00" y="1188.00" width="354.00" height="3.30" fill="url(#cie35)" />
<rect x="717.00" y="1191.00" width="354.00" height="3.30" fill="url(#cie36)" />
<rect x="717.00" y="1194.00" width="354.00" height="3.30" fill="url(#cie37)" />
<rect x="717.00" y="1197.00" width="354.00" height="3.30" fill="url(#cie38)" />
<rect x="717.00" y="1200.00" width="354.00" height="3.30" fill="url(#cie39)" />
<rect x="717.00" y="1203.00" width="354.00" height="3.30" fill="url(#cie40)" />
<rect x="717.00" y="1206.00" width="354.00" height="3.30" fill="url(#cie41)" />
<rect x="717.00" y="1209.00" width="354.00" height="3.30" fill="url(#cie42)" />
<rect x="717.00" y="1212.00" width="354.00" height="3.30" fill="url(#cie43)" />
<rect x="717.00" y="1215.00" width="354.00" height="3.30" fill="url(#cie44)" />
<rect x="717.00" y="1218.00" width="354.00" height="3.30" fill="url(#cie45)" />
<rect x="717.00" y="1221.00" width="354.00" height="3.30" fill="url(#cie46)" />
<rect x="717.00" y="1224.00" width="354.00" height="3.30" fill="url(#cie47)" />
<rect x="717.00" y="1227.00" width="354.00" height="3.30" fill="url(#cie48)" />
<rect x="717.00" y="1230.00" width="354.00" height="3.30" fill="url(#cie49)" />
<rect x="717.00" y="1233.00" width="354.00" height="3.30" fill="url(#cie50)" />
<rect x="717.00" y="1236.00" width="354.00" height="3.30" fill="url(#cie51)" />
<rect x="717.00" y="1239.00" width="354.00" height="3.30" fill="url(#cie52)" />
<rect x="717.00" y="1242.00" width="354.00" height="3.30" fill="url(#cie53)" />
<rect x="717.00" y="1245.00" width="354.00" height="3.30" fill="url(#cie54)" />
<rect x="717.00" y="1248.00" width="354.00" height="3.30" fill="url(#cie55)" />
<rect x="717.00" y="1251.00" width="354.00" height="3.30" fill="url(#cie56)" />
<rect x="717.00" y="1254.00" width="354.00" height="3.30" fill="url(#cie57)" />
<rect x="717.00" y="1257.00" width="354.00" height="3.30" fill="url(#cie58)" />
<rect x="717.00" y="1260.00" width="354.00" height="3.30" fill="url(#cie59)" />
<rect x="717.00" y="1263.00" width="354.00" height="3.30" fill="url(#cie60)" />
<rect x="717.00" y="1266.00" width="354.00" height="3.30" fill="url(#cie61)" />
<rect x="717.00" y="1269.00" width="354.00" height="3.30" fill="url(#cie62)" />
<rect x="717.00" y="1272.00" width="354.00" height="3.30" fill="url(#cie63)" />
<rect x="717.00" y="1275.00" width="354.00" height="3.30" fill="url(#cie64)" />
<rect x="717.00" y="1278.00" width="354.00" height="3.30" fill="url(#cie65)" />
<rect x="717.00" y="1281.00" width="354.00" height="3.30" fill="url(#cie66)" />
<rect x="717.00" y="1284.00" width="354.00" height="3.30" fill="url(#cie67)" />
<rect x="717.00" y="1287.00" width="354.00" height="3.30" fill="url(#cie68)" />
<rect x="717.00" y="1290.00" width="354.00" height="3.30" fill="url(#cie69)" />
<rect x="717.00" y="1293.00" width="354.00" height="3.30" fill="url(#cie70)" />
<rect x="717.00" y="1296.00" width="354.00" height="3.30" fill="url(#cie71)" />
<rect x="717.00" y="1299.00" width="354.00" height="3.30" fill="url(#cie72)" />
<rect x="717.00" y="1302.00" width="354.00" height="3.30" fill="url(#cie73)" />
<rect x="717.00" y="1305.00" width="354.00" height="3.30" fill="url(#cie74)" />
<rect x="717.00" y="1308.00" width="354.00" height="3.30" fill="url(#cie75)" />
<rect x="717.00" y="1311.00" width="354.00" height="3.30" fill="url(#cie76)" />
<rect x="717.00" y="1314.00" width="354.00" height="2.30" fill="url(#cie77)" />
<clipPath id="cpC"><rect x="717" y="1083" width="354" height="233"/></clipPath>
<line x1="759" y1="1318" x2="1072" y2="1120.3" stroke="#000" stroke-width="3.4" clip-path="url(#cpC)"/>
<rect x="884.5" y="1188.5" width="19" height="19" fill="#fff" stroke="#000" stroke-width="2"/>
<g clip-path="url(#cpC)"><circle cx="860.0" cy="1209.1" r="6.8" fill="rgb(26,26,26)" stroke="#000" stroke-width="1.9"/><circle cx="916.9" cy="1155.2" r="6.2" fill="rgb(51,51,51)" stroke="#000" stroke-width="1.9"/><circle cx="931.2" cy="1143.5" r="6.2" fill="rgb(76,76,76)" stroke="#000" stroke-width="1.9"/><circle cx="934.7" cy="1139.7" r="6.2" fill="rgb(102,102,102)" stroke="#000" stroke-width="1.9"/><circle cx="936.9" cy="1136.9" r="6.2" fill="rgb(128,128,128)" stroke="#000" stroke-width="1.9"/><circle cx="937.6" cy="1136.4" r="6.2" fill="rgb(153,153,153)" stroke="#000" stroke-width="1.9"/><circle cx="936.9" cy="1137.4" r="6.2" fill="rgb(178,178,178)" stroke="#000" stroke-width="1.9"/><circle cx="933.3" cy="1140.7" r="6.2" fill="rgb(204,204,204)" stroke="#000" stroke-width="1.9"/><circle cx="925.5" cy="1149.1" r="6.2" fill="rgb(230,230,230)" stroke="#000" stroke-width="1.9"/><circle cx="897.7" cy="1178.2" r="6.2" fill="rgb(255,255,255)" stroke="#000" stroke-width="1.9"/></g>
<rect x="715.00" y="1081.00" width="358.00" height="2.00" fill="#9a9a9a" />
<rect x="715.00" y="1316.00" width="358.00" height="2.00" fill="#9a9a9a" />
<rect x="715.00" y="1081.00" width="2.00" height="237.00" fill="#9a9a9a" />
<rect x="1071.00" y="1081.00" width="2.00" height="237.00" fill="#9a9a9a" />
<rect x="730.80" y="1317.00" width="2.00" height="7.00" fill="#e8e8e8" />
<text x="731.80" y="1347.00" font-size="21.5" fill="#e4e4e4" text-anchor="middle" textLength="38.91" lengthAdjust="spacingAndGlyphs" >0.29</text>
<rect x="802.00" y="1317.00" width="2.00" height="7.00" fill="#e8e8e8" />
<text x="803.00" y="1347.00" font-size="21.5" fill="#e4e4e4" text-anchor="middle" textLength="27.79" lengthAdjust="spacingAndGlyphs" >0.3</text>
<rect x="873.20" y="1317.00" width="2.00" height="7.00" fill="#e8e8e8" />
<text x="874.20" y="1347.00" font-size="21.5" fill="#e4e4e4" text-anchor="middle" textLength="38.91" lengthAdjust="spacingAndGlyphs" >0.31</text>
<rect x="944.40" y="1317.00" width="2.00" height="7.00" fill="#e8e8e8" />
<text x="945.40" y="1347.00" font-size="21.5" fill="#e4e4e4" text-anchor="middle" textLength="38.91" lengthAdjust="spacingAndGlyphs" >0.32</text>
<rect x="1015.60" y="1317.00" width="2.00" height="7.00" fill="#e8e8e8" />
<text x="1016.60" y="1347.00" font-size="21.5" fill="#e4e4e4" text-anchor="middle" textLength="38.91" lengthAdjust="spacingAndGlyphs" >0.33</text>
<rect x="707.00" y="1148.70" width="8.00" height="2.00" fill="#e8e8e8" />
<text x="706.50" y="1157.20" font-size="21.5" fill="#e4e4e4" text-anchor="end" textLength="38.91" lengthAdjust="spacingAndGlyphs" >0.34</text>
<rect x="707.00" y="1242.50" width="8.00" height="2.00" fill="#e8e8e8" />
<text x="706.50" y="1251.00" font-size="21.5" fill="#e4e4e4" text-anchor="end" textLength="38.91" lengthAdjust="spacingAndGlyphs" >0.32</text>
<rect x="1086.00" y="1040.00" width="1208.00" height="300.00" fill="#0e0e0e" />
<rect x="1088.00" y="1041.50" width="1205.00" height="17.50" fill="#2e2e2e" />
<rect x="1088.00" y="1059.00" width="1205.00" height="17.60" fill="url(#gHdr)" />
<text x="1311.50" y="1066.30" font-size="17.5" fill="#ececec" text-anchor="middle" textLength="9.54" lengthAdjust="spacingAndGlyphs" >0</text>
<text x="1409.60" y="1066.30" font-size="17.5" fill="#ececec" text-anchor="middle" textLength="19.07" lengthAdjust="spacingAndGlyphs" >10</text>
<text x="1502.60" y="1066.30" font-size="17.5" fill="#ececec" text-anchor="middle" textLength="19.07" lengthAdjust="spacingAndGlyphs" >20</text>
<text x="1595.60" y="1066.30" font-size="17.5" fill="#ececec" text-anchor="middle" textLength="19.07" lengthAdjust="spacingAndGlyphs" >30</text>
<text x="1688.60" y="1066.30" font-size="17.5" fill="#ececec" text-anchor="middle" textLength="19.07" lengthAdjust="spacingAndGlyphs" >40</text>
<text x="1781.60" y="1066.30" font-size="17.5" fill="#ececec" text-anchor="middle" textLength="19.07" lengthAdjust="spacingAndGlyphs" >50</text>
<text x="1874.60" y="1066.30" font-size="17.5" fill="#ececec" text-anchor="middle" textLength="19.07" lengthAdjust="spacingAndGlyphs" >60</text>
<text x="1967.60" y="1066.30" font-size="17.5" fill="#ececec" text-anchor="middle" textLength="19.07" lengthAdjust="spacingAndGlyphs" >70</text>
<text x="2060.60" y="1066.30" font-size="17.5" fill="#ececec" text-anchor="middle" textLength="19.07" lengthAdjust="spacingAndGlyphs" >80</text>
<text x="2153.60" y="1066.30" font-size="17.5" fill="#ececec" text-anchor="middle" textLength="19.07" lengthAdjust="spacingAndGlyphs" >90</text>
<text x="2246.60" y="1066.30" font-size="17.5" fill="#ececec" text-anchor="middle" textLength="28.61" lengthAdjust="spacingAndGlyphs" >100</text>
<rect x="1088.00" y="1076.60" width="1205.00" height="33.08" fill="#404040" />
<text x="1102.00" y="1101.20" font-size="21.8" fill="#f2f2f2" font-weight="bold" textLength="66.67" lengthAdjust="spacingAndGlyphs" >x: CIE31</text>
<text x="1265.00" y="1101.20" font-size="21.8" fill="#f0f0f0" textLength="52.67" lengthAdjust="spacingAndGlyphs" >0.2315</text>
<text x="1367.60" y="1101.20" font-size="21.8" fill="#f0f0f0" textLength="52.67" lengthAdjust="spacingAndGlyphs" >0.3080</text>
<text x="1460.60" y="1101.20" font-size="21.8" fill="#f0f0f0" textLength="52.67" lengthAdjust="spacingAndGlyphs" >0.3160</text>
<text x="1553.60" y="1101.20" font-size="21.8" fill="#f0f0f0" textLength="52.67" lengthAdjust="spacingAndGlyphs" >0.3180</text>
<text x="1646.60" y="1101.20" font-size="21.8" fill="#f0f0f0" textLength="52.67" lengthAdjust="spacingAndGlyphs" >0.3185</text>
<text x="1739.60" y="1101.20" font-size="21.8" fill="#f0f0f0" textLength="52.67" lengthAdjust="spacingAndGlyphs" >0.3188</text>
<text x="1832.60" y="1101.20" font-size="21.8" fill="#f0f0f0" textLength="52.67" lengthAdjust="spacingAndGlyphs" >0.3189</text>
<text x="1925.60" y="1101.20" font-size="21.8" fill="#f0f0f0" textLength="52.67" lengthAdjust="spacingAndGlyphs" >0.3188</text>
<text x="2018.60" y="1101.20" font-size="21.8" fill="#f0f0f0" textLength="52.67" lengthAdjust="spacingAndGlyphs" >0.3183</text>
<text x="2111.60" y="1101.20" font-size="21.8" fill="#f0f0f0" textLength="52.67" lengthAdjust="spacingAndGlyphs" >0.3172</text>
<text x="2204.60" y="1101.20" font-size="21.8" fill="#f0f0f0" textLength="52.67" lengthAdjust="spacingAndGlyphs" >0.3133</text>
<rect x="1088.00" y="1109.47" width="1205.00" height="33.08" fill="#808080" />
<text x="1102.00" y="1134.07" font-size="21.8" fill="#f2f2f2" font-weight="bold" textLength="66.67" lengthAdjust="spacingAndGlyphs" >y: CIE31</text>
<text x="1265.00" y="1134.07" font-size="21.8" fill="#f0f0f0" textLength="52.67" lengthAdjust="spacingAndGlyphs" >0.2202</text>
<text x="1367.60" y="1134.07" font-size="21.8" fill="#f0f0f0" textLength="52.67" lengthAdjust="spacingAndGlyphs" >0.3269</text>
<text x="1460.60" y="1134.07" font-size="21.8" fill="#f0f0f0" textLength="52.67" lengthAdjust="spacingAndGlyphs" >0.3384</text>
<text x="1553.60" y="1134.07" font-size="21.8" fill="#f0f0f0" textLength="52.67" lengthAdjust="spacingAndGlyphs" >0.3409</text>
<text x="1646.60" y="1134.07" font-size="21.8" fill="#f0f0f0" textLength="52.67" lengthAdjust="spacingAndGlyphs" >0.3417</text>
<text x="1739.60" y="1134.07" font-size="21.8" fill="#f0f0f0" textLength="52.67" lengthAdjust="spacingAndGlyphs" >0.3423</text>
<text x="1832.60" y="1134.07" font-size="21.8" fill="#f0f0f0" textLength="52.67" lengthAdjust="spacingAndGlyphs" >0.3424</text>
<text x="1925.60" y="1134.07" font-size="21.8" fill="#f0f0f0" textLength="52.67" lengthAdjust="spacingAndGlyphs" >0.3422</text>
<text x="2018.60" y="1134.07" font-size="21.8" fill="#f0f0f0" textLength="52.67" lengthAdjust="spacingAndGlyphs" >0.3415</text>
<text x="2111.60" y="1134.07" font-size="21.8" fill="#f0f0f0" textLength="52.67" lengthAdjust="spacingAndGlyphs" >0.3397</text>
<text x="2204.60" y="1134.07" font-size="21.8" fill="#f0f0f0" textLength="52.67" lengthAdjust="spacingAndGlyphs" >0.3335</text>
<rect x="1088.00" y="1142.35" width="1205.00" height="33.08" fill="#404040" />
<text x="1102.00" y="1166.95" font-size="21.8" fill="#f2f2f2" font-weight="bold" textLength="11.27" lengthAdjust="spacingAndGlyphs" >Y</text>
<text x="1265.00" y="1166.95" font-size="21.8" fill="#f0f0f0" textLength="52.67" lengthAdjust="spacingAndGlyphs" >0.1852</text>
<text x="1367.60" y="1166.95" font-size="21.8" fill="#f0f0f0" textLength="52.67" lengthAdjust="spacingAndGlyphs" >2.4150</text>
<text x="1460.60" y="1166.95" font-size="21.8" fill="#f0f0f0" textLength="52.67" lengthAdjust="spacingAndGlyphs" >9.4558</text>
<text x="1553.60" y="1166.95" font-size="21.8" fill="#f0f0f0" textLength="62.25" lengthAdjust="spacingAndGlyphs" >22.2879</text>
<text x="1646.60" y="1166.95" font-size="21.8" fill="#f0f0f0" textLength="62.25" lengthAdjust="spacingAndGlyphs" >42.1021</text>
<text x="1739.60" y="1166.95" font-size="21.8" fill="#f0f0f0" textLength="62.25" lengthAdjust="spacingAndGlyphs" >69.0856</text>
<text x="1832.60" y="1166.95" font-size="21.8" fill="#f0f0f0" textLength="71.82" lengthAdjust="spacingAndGlyphs" >102.5941</text>
<text x="1925.60" y="1166.95" font-size="21.8" fill="#f0f0f0" textLength="71.82" lengthAdjust="spacingAndGlyphs" >144.0100</text>
<text x="2018.60" y="1166.95" font-size="21.8" fill="#f0f0f0" textLength="71.82" lengthAdjust="spacingAndGlyphs" >195.4120</text>
<text x="2111.60" y="1166.95" font-size="21.8" fill="#f0f0f0" textLength="71.82" lengthAdjust="spacingAndGlyphs" >254.7583</text>
<text x="2204.60" y="1166.95" font-size="21.8" fill="#f0f0f0" textLength="71.82" lengthAdjust="spacingAndGlyphs" >321.3957</text>
<rect x="1088.00" y="1175.22" width="1205.00" height="33.08" fill="#808080" />
<text x="1102.00" y="1199.82" font-size="21.8" fill="#f2f2f2" font-weight="bold" textLength="66.03" lengthAdjust="spacingAndGlyphs" >Target Y</text>
<text x="1265.00" y="1199.82" font-size="21.8" fill="#f0f0f0" textLength="52.67" lengthAdjust="spacingAndGlyphs" >0.0000</text>
<text x="1367.60" y="1199.82" font-size="21.8" fill="#f0f0f0" textLength="52.67" lengthAdjust="spacingAndGlyphs" >3.3200</text>
<text x="1460.60" y="1199.82" font-size="21.8" fill="#f0f0f0" textLength="62.25" lengthAdjust="spacingAndGlyphs" >10.6397</text>
<text x="1553.60" y="1199.82" font-size="21.8" fill="#f0f0f0" textLength="62.25" lengthAdjust="spacingAndGlyphs" >23.2279</text>
<text x="1646.60" y="1199.82" font-size="21.8" fill="#f0f0f0" textLength="62.25" lengthAdjust="spacingAndGlyphs" >42.7033</text>
<text x="1739.60" y="1199.82" font-size="21.8" fill="#f0f0f0" textLength="62.25" lengthAdjust="spacingAndGlyphs" >69.3766</text>
<text x="1832.60" y="1199.82" font-size="21.8" fill="#f0f0f0" textLength="71.82" lengthAdjust="spacingAndGlyphs" >102.3795</text>
<text x="1925.60" y="1199.82" font-size="21.8" fill="#f0f0f0" textLength="71.82" lengthAdjust="spacingAndGlyphs" >143.0857</text>
<text x="2018.60" y="1199.82" font-size="21.8" fill="#f0f0f0" textLength="71.82" lengthAdjust="spacingAndGlyphs" >194.0675</text>
<text x="2111.60" y="1199.82" font-size="21.8" fill="#f0f0f0" textLength="71.82" lengthAdjust="spacingAndGlyphs" >254.3197</text>
<text x="2204.60" y="1199.82" font-size="21.8" fill="#f0f0f0" textLength="71.82" lengthAdjust="spacingAndGlyphs" >321.3957</text>
<rect x="1088.00" y="1208.10" width="1205.00" height="33.08" fill="#404040" />
<text x="1102.00" y="1232.70" font-size="21.8" fill="#f2f2f2" font-weight="bold" textLength="133.28" lengthAdjust="spacingAndGlyphs" >Gamma Log/Log</text>
<text x="1265.00" y="1232.70" font-size="21.8" fill="#f0f0f0" textLength="52.67" lengthAdjust="spacingAndGlyphs" >1.2778</text>
<text x="1367.60" y="1232.70" font-size="21.8" fill="#f0f0f0" textLength="52.67" lengthAdjust="spacingAndGlyphs" >2.1422</text>
<text x="1460.60" y="1232.70" font-size="21.8" fill="#f0f0f0" textLength="52.67" lengthAdjust="spacingAndGlyphs" >2.1909</text>
<text x="1553.60" y="1232.70" font-size="21.8" fill="#f0f0f0" textLength="52.67" lengthAdjust="spacingAndGlyphs" >2.2045</text>
<text x="1646.60" y="1232.70" font-size="21.8" fill="#f0f0f0" textLength="52.67" lengthAdjust="spacingAndGlyphs" >2.2183</text>
<text x="1739.60" y="1232.70" font-size="21.8" fill="#f0f0f0" textLength="52.67" lengthAdjust="spacingAndGlyphs" >2.2305</text>
<text x="1832.60" y="1232.70" font-size="21.8" fill="#f0f0f0" textLength="52.67" lengthAdjust="spacingAndGlyphs" >2.2354</text>
<text x="1925.60" y="1232.70" font-size="21.8" fill="#f0f0f0" textLength="52.67" lengthAdjust="spacingAndGlyphs" >2.2332</text>
<text x="2018.60" y="1232.70" font-size="21.8" fill="#f0f0f0" textLength="52.67" lengthAdjust="spacingAndGlyphs" >2.2298</text>
<text x="2111.60" y="1232.70" font-size="21.8" fill="#f0f0f0" textLength="52.67" lengthAdjust="spacingAndGlyphs" >2.2519</text>
<text x="2204.60" y="1232.70" font-size="21.8" fill="#f0f0f0" textLength="52.67" lengthAdjust="spacingAndGlyphs" >2.2749</text>
<rect x="1088.00" y="1240.97" width="1205.00" height="33.08" fill="#808080" />
<text x="1102.00" y="1265.57" font-size="21.8" fill="#f2f2f2" font-weight="bold" textLength="34.72" lengthAdjust="spacingAndGlyphs" >CCT</text>
<text x="1265.00" y="1265.57" font-size="21.8" fill="#f0f0f0" textLength="90.98" lengthAdjust="spacingAndGlyphs" >67131.0000</text>
<text x="1367.60" y="1265.57" font-size="21.8" fill="#f0f0f0" textLength="81.40" lengthAdjust="spacingAndGlyphs" >6783.0000</text>
<text x="1460.60" y="1265.57" font-size="21.8" fill="#f0f0f0" textLength="81.40" lengthAdjust="spacingAndGlyphs" >6272.0000</text>
<text x="1553.60" y="1265.57" font-size="21.8" fill="#f0f0f0" textLength="81.40" lengthAdjust="spacingAndGlyphs" >6165.0000</text>
<text x="1646.60" y="1265.57" font-size="21.8" fill="#f0f0f0" textLength="81.40" lengthAdjust="spacingAndGlyphs" >6136.0000</text>
<text x="1739.60" y="1265.57" font-size="21.8" fill="#f0f0f0" textLength="81.40" lengthAdjust="spacingAndGlyphs" >6121.0000</text>
<text x="1832.60" y="1265.57" font-size="21.8" fill="#f0f0f0" textLength="80.12" lengthAdjust="spacingAndGlyphs" >6115.0000</text>
<text x="1925.60" y="1265.57" font-size="21.8" fill="#f0f0f0" textLength="81.40" lengthAdjust="spacingAndGlyphs" >6121.0000</text>
<text x="2018.60" y="1265.57" font-size="21.8" fill="#f0f0f0" textLength="81.40" lengthAdjust="spacingAndGlyphs" >6144.0000</text>
<text x="2111.60" y="1265.57" font-size="21.8" fill="#f0f0f0" textLength="81.40" lengthAdjust="spacingAndGlyphs" >6206.0000</text>
<text x="2204.60" y="1265.57" font-size="21.8" fill="#f0f0f0" textLength="81.40" lengthAdjust="spacingAndGlyphs" >6442.0000</text>
<rect x="1088.00" y="1273.85" width="1205.00" height="33.08" fill="#404040" />
<text x="1102.00" y="1298.45" font-size="21.8" fill="#f2f2f2" font-weight="bold" textLength="65.69" lengthAdjust="spacingAndGlyphs" >ΔE 2000</text>
<text x="1265.00" y="1298.45" font-size="21.8" fill="#f0f0f0" textLength="52.67" lengthAdjust="spacingAndGlyphs" >1.2141</text>
<text x="1367.60" y="1298.45" font-size="21.8" fill="#f0f0f0" textLength="52.67" lengthAdjust="spacingAndGlyphs" >1.5948</text>
<text x="1460.60" y="1298.45" font-size="21.8" fill="#f0f0f0" textLength="52.67" lengthAdjust="spacingAndGlyphs" >2.0623</text>
<text x="1553.60" y="1298.45" font-size="21.8" fill="#f0f0f0" textLength="52.67" lengthAdjust="spacingAndGlyphs" >2.8553</text>
<text x="1646.60" y="1298.45" font-size="21.8" fill="#f0f0f0" textLength="52.67" lengthAdjust="spacingAndGlyphs" >3.6108</text>
<text x="1739.60" y="1298.45" font-size="21.8" fill="#f0f0f0" textLength="52.67" lengthAdjust="spacingAndGlyphs" >4.3391</text>
<text x="1832.60" y="1298.45" font-size="21.8" fill="#f0f0f0" textLength="52.67" lengthAdjust="spacingAndGlyphs" >4.9158</text>
<text x="1925.60" y="1298.45" font-size="21.8" fill="#f0f0f0" textLength="52.67" lengthAdjust="spacingAndGlyphs" >5.3714</text>
<text x="2018.60" y="1298.45" font-size="21.8" fill="#f0f0f0" textLength="52.67" lengthAdjust="spacingAndGlyphs" >5.6425</text>
<text x="2111.60" y="1298.45" font-size="21.8" fill="#f0f0f0" textLength="52.67" lengthAdjust="spacingAndGlyphs" >5.3944</text>
<text x="2204.60" y="1298.45" font-size="21.8" fill="#f0f0f0" textLength="52.67" lengthAdjust="spacingAndGlyphs" >3.1918</text>
<rect x="1088.00" y="1306.72" width="1205.00" height="33.28" fill="#808080" />
<text x="1102.00" y="1331.32" font-size="21.8" fill="#f2f2f2" font-weight="bold" textLength="54.39" lengthAdjust="spacingAndGlyphs" >ΔE ITP</text>
<text x="1265.00" y="1331.32" font-size="21.8" fill="#f0f0f0" textLength="62.25" lengthAdjust="spacingAndGlyphs" >61.5218</text>
<text x="1367.60" y="1331.32" font-size="21.8" fill="#f0f0f0" textLength="62.25" lengthAdjust="spacingAndGlyphs" >14.7042</text>
<text x="1460.60" y="1331.32" font-size="21.8" fill="#f0f0f0" textLength="52.67" lengthAdjust="spacingAndGlyphs" >7.4050</text>
<text x="1553.60" y="1331.32" font-size="21.8" fill="#f0f0f0" textLength="52.67" lengthAdjust="spacingAndGlyphs" >4.9163</text>
<text x="1646.60" y="1331.32" font-size="21.8" fill="#f0f0f0" textLength="52.67" lengthAdjust="spacingAndGlyphs" >4.7759</text>
<text x="1739.60" y="1331.32" font-size="21.8" fill="#f0f0f0" textLength="52.67" lengthAdjust="spacingAndGlyphs" >5.0701</text>
<text x="1832.60" y="1331.32" font-size="21.8" fill="#f0f0f0" textLength="52.67" lengthAdjust="spacingAndGlyphs" >5.2471</text>
<text x="1925.60" y="1331.32" font-size="21.8" fill="#f0f0f0" textLength="52.67" lengthAdjust="spacingAndGlyphs" >5.2887</text>
<text x="2018.60" y="1331.32" font-size="21.8" fill="#f0f0f0" textLength="52.67" lengthAdjust="spacingAndGlyphs" >5.0914</text>
<text x="2111.60" y="1331.32" font-size="21.8" fill="#f0f0f0" textLength="52.67" lengthAdjust="spacingAndGlyphs" >4.3667</text>
<text x="2204.60" y="1331.32" font-size="21.8" fill="#f0f0f0" textLength="52.67" lengthAdjust="spacingAndGlyphs" >1.9527</text>
<rect x="201.00" y="1490.00" width="2357.00" height="62.00" fill="url(#gStrip)" />
<rect x="201.0" y="1489.5" width="150" height="64" rx="4" fill="url(#gSwBtn)"/>
<rect x="206.0" y="1494.7" width="140" height="36" rx="3" fill="rgb(0,0,0)" stroke="rgba(0,0,0,0.25)" stroke-width="1"/>
<text x="276.00" y="1546.00" font-size="12" fill="#333" text-anchor="middle" font-weight="bold" textLength="6.01" lengthAdjust="spacingAndGlyphs" >0</text>
<rect x="353.2" y="1489.5" width="150" height="64" rx="4" fill="url(#gSwBtn)"/>
<rect x="358.2" y="1494.7" width="140" height="36" rx="3" fill="rgb(26,26,26)" stroke="rgba(0,0,0,0.25)" stroke-width="1"/>
<text x="428.20" y="1546.00" font-size="12" fill="#333" text-anchor="middle" font-weight="bold" textLength="12.01" lengthAdjust="spacingAndGlyphs" >10</text>
<rect x="505.4" y="1489.5" width="150" height="64" rx="4" fill="url(#gSwBtn)"/>
<rect x="510.4" y="1494.7" width="140" height="36" rx="3" fill="rgb(51,51,51)" stroke="rgba(0,0,0,0.25)" stroke-width="1"/>
<text x="580.40" y="1546.00" font-size="12" fill="#333" text-anchor="middle" font-weight="bold" textLength="12.01" lengthAdjust="spacingAndGlyphs" >20</text>
<rect x="657.6" y="1489.5" width="150" height="64" rx="4" fill="url(#gSwBtn)"/>
<rect x="662.6" y="1494.7" width="140" height="36" rx="3" fill="rgb(76,76,76)" stroke="rgba(0,0,0,0.25)" stroke-width="1"/>
<text x="732.60" y="1546.00" font-size="12" fill="#333" text-anchor="middle" font-weight="bold" textLength="12.01" lengthAdjust="spacingAndGlyphs" >30</text>
<rect x="809.8" y="1489.5" width="150" height="64" rx="4" fill="url(#gSwBtn)"/>
<rect x="814.8" y="1494.7" width="140" height="36" rx="3" fill="rgb(102,102,102)" stroke="rgba(0,0,0,0.25)" stroke-width="1"/>
<text x="884.80" y="1546.00" font-size="12" fill="#333" text-anchor="middle" font-weight="bold" textLength="12.01" lengthAdjust="spacingAndGlyphs" >40</text>
<rect x="962.0" y="1489.5" width="150" height="64" rx="4" fill="url(#gSwBtn)"/>
<rect x="967.0" y="1494.7" width="140" height="36" rx="3" fill="rgb(128,128,128)" stroke="rgba(0,0,0,0.25)" stroke-width="1"/>
<text x="1037.00" y="1546.00" font-size="12" fill="#333" text-anchor="middle" font-weight="bold" textLength="12.01" lengthAdjust="spacingAndGlyphs" >50</text>
<rect x="1114.2" y="1489.5" width="150" height="64" rx="4" fill="url(#gSwBtn)"/>
<rect x="1119.2" y="1494.7" width="140" height="36" rx="3" fill="rgb(153,153,153)" stroke="rgba(0,0,0,0.25)" stroke-width="1"/>
<text x="1189.20" y="1546.00" font-size="12" fill="#333" text-anchor="middle" font-weight="bold" textLength="12.01" lengthAdjust="spacingAndGlyphs" >60</text>
<rect x="1266.4" y="1489.5" width="150" height="64" rx="4" fill="url(#gSwBtn)"/>
<rect x="1271.4" y="1494.7" width="140" height="36" rx="3" fill="rgb(178,178,178)" stroke="rgba(0,0,0,0.25)" stroke-width="1"/>
<text x="1341.40" y="1546.00" font-size="12" fill="#333" text-anchor="middle" font-weight="bold" textLength="12.01" lengthAdjust="spacingAndGlyphs" >70</text>
<rect x="1418.6" y="1489.5" width="150" height="64" rx="4" fill="url(#gSwBtn)"/>
<rect x="1423.6" y="1494.7" width="140" height="36" rx="3" fill="rgb(204,204,204)" stroke="rgba(0,0,0,0.25)" stroke-width="1"/>
<text x="1493.60" y="1546.00" font-size="12" fill="#333" text-anchor="middle" font-weight="bold" textLength="12.01" lengthAdjust="spacingAndGlyphs" >80</text>
<rect x="1570.8" y="1489.5" width="150" height="64" rx="4" fill="url(#gSwBtn)"/>
<rect x="1575.8" y="1494.7" width="140" height="36" rx="3" fill="rgb(230,230,230)" stroke="rgba(0,0,0,0.25)" stroke-width="1"/>
<text x="1645.80" y="1546.00" font-size="12" fill="#333" text-anchor="middle" font-weight="bold" textLength="12.01" lengthAdjust="spacingAndGlyphs" >90</text>
<rect x="1721.5" y="1489.5" width="148.5" height="64" rx="4" fill="#1c1c1c"/>
<rect x="1727" y="1495" width="139" height="36" rx="3" fill="#fff"/>
<text x="1795.50" y="1546.00" font-size="12" fill="#f4f4f4" text-anchor="middle" font-weight="bold" textLength="18.02" lengthAdjust="spacingAndGlyphs" >100</text>
<rect x="2286.5" y="1490.5" width="280" height="30" rx="3" fill="url(#gIco)" stroke="#3a3a3a" stroke-width="1"/>
<rect x="2331.20" y="1491.00" width="1.20" height="29.00" fill="#3c3c3c" />
<rect x="2376.40" y="1491.00" width="1.20" height="29.00" fill="#3c3c3c" />
<rect x="2421.60" y="1491.00" width="1.20" height="29.00" fill="#3c3c3c" />
<rect x="2466.80" y="1491.00" width="1.20" height="29.00" fill="#3c3c3c" />
<rect x="2512.00" y="1491.00" width="1.20" height="29.00" fill="#3c3c3c" />
<circle cx="2309.0" cy="1510" r="9" fill="url(#gNavC)" opacity="0.6"/>
<circle cx="2354.2" cy="1510" r="9" fill="url(#gNavC)" opacity="0.6"/>
<circle cx="2399.4" cy="1510" r="9" fill="url(#gNavC)" opacity="0.6"/>
<circle cx="2444.6" cy="1510" r="9" fill="url(#gNavC)" opacity="0.6"/>
<circle cx="2489.8" cy="1510" r="9" fill="url(#gNavC)" opacity="0.6"/>
<circle cx="2535.0" cy="1510" r="9" fill="url(#gNavC)" opacity="0.6"/>
<rect x="2237.5" y="1508.5" width="48" height="50" rx="4" fill="url(#gNav)" stroke="#6a6a6a" stroke-width="1"/>
<rect x="2247" y="1516" width="29" height="29" rx="3" fill="none" stroke="#222" stroke-width="2.5"/>
<rect x="2254.00" y="1523.00" width="14.00" height="14.00" fill="#000" />
<rect x="2286.5" y="1521.5" width="136" height="34" rx="3" fill="url(#gNav)" stroke="#6a6a6a" stroke-width="1"/>
<rect x="2422.5" y="1521.5" width="140" height="34" rx="3" fill="url(#gNav)" stroke="#6a6a6a" stroke-width="1"/>
<circle cx="2317" cy="1536" r="9.5" fill="url(#gNavC)"/>
<circle cx="2530" cy="1536" r="9.5" fill="url(#gNavC)"/>
<text x="2317.00" y="1541.50" font-size="17" fill="#333" text-anchor="middle" >«</text>
<text x="2530.00" y="1541.50" font-size="17" fill="#333" text-anchor="middle" >»</text>
<text x="2344.00" y="1543.60" font-size="23" fill="#2e2e2e" textLength="50.00" lengthAdjust="spacingAndGlyphs" >Back</text>
<text x="2450.60" y="1543.60" font-size="23" fill="#2e2e2e" textLength="51.00" lengthAdjust="spacingAndGlyphs" >Next</text>
<g opacity="0.8"><path d="M2226.5 1510.5 L2224 1481.5 L2176.5 1472.5 L2178.5 1518.5 L2208.5 1533.5 L2261 1517 L2232 1512" fill="none" stroke="#d8d8d8" stroke-width="8" stroke-linejoin="round" stroke-linecap="round"/><path d="M2188 1515 L2226.5 1511" fill="none" stroke="#d8d8d8" stroke-width="4.5" stroke-linecap="round"/><path d="M2226.5 1510.5 L2224 1481.5 L2176.5 1472.5 L2178.5 1518.5 L2208.5 1533.5 L2261 1517 L2232 1512" fill="none" stroke="#8e2a31" stroke-width="5" stroke-linejoin="round" stroke-linecap="round"/><path d="M2188 1515 L2226.5 1511" fill="none" stroke="#8e2a31" stroke-width="1.8" stroke-linecap="round"/><path d="M2188.9 1487.3 Q2193 1482.5 2197.5 1483.5 Q2202 1487 2206.8 1494.4 L2232.2 1468.8 Q2235 1469 2234 1471.5 L2204.3 1507.7 Q2201 1500 2198 1496 Z" fill="#2a2a2a" stroke="#cfcfcf" stroke-width="1.8" stroke-linejoin="round"/></g>
<g opacity="0.62"><text x="2233.8" y="1508" font-size="37.4" font-weight="bold" lengthAdjust="spacingAndGlyphs" textLength="198.5" fill="none" stroke="#e8e8e8" stroke-width="4.2" stroke-linejoin="round">NOTEBOOK</text><text x="2233.8" y="1508" font-size="37.4" font-weight="bold" lengthAdjust="spacingAndGlyphs" textLength="198.5" fill="#a8242c" stroke="#a8242c" stroke-width="1.3">NOTEBOOK</text></g>
<g opacity="0.7"><text x="2433" y="1508" font-size="37.4" font-weight="bold" lengthAdjust="spacingAndGlyphs" textLength="116.5" fill="none" stroke="#e4e4e4" stroke-width="3.6" stroke-linejoin="round">CHECK</text></g>
<g opacity="0.5"><text x="2433" y="1508" font-size="37.4" font-weight="bold" lengthAdjust="spacingAndGlyphs" textLength="116.5" fill="#202020" stroke="#202020" stroke-width="1.1">CHECK</text></g>
<rect x="2553.00" y="88.00" width="7.00" height="1464.00" fill="url(#gEdge)" /></svg></body></html>
